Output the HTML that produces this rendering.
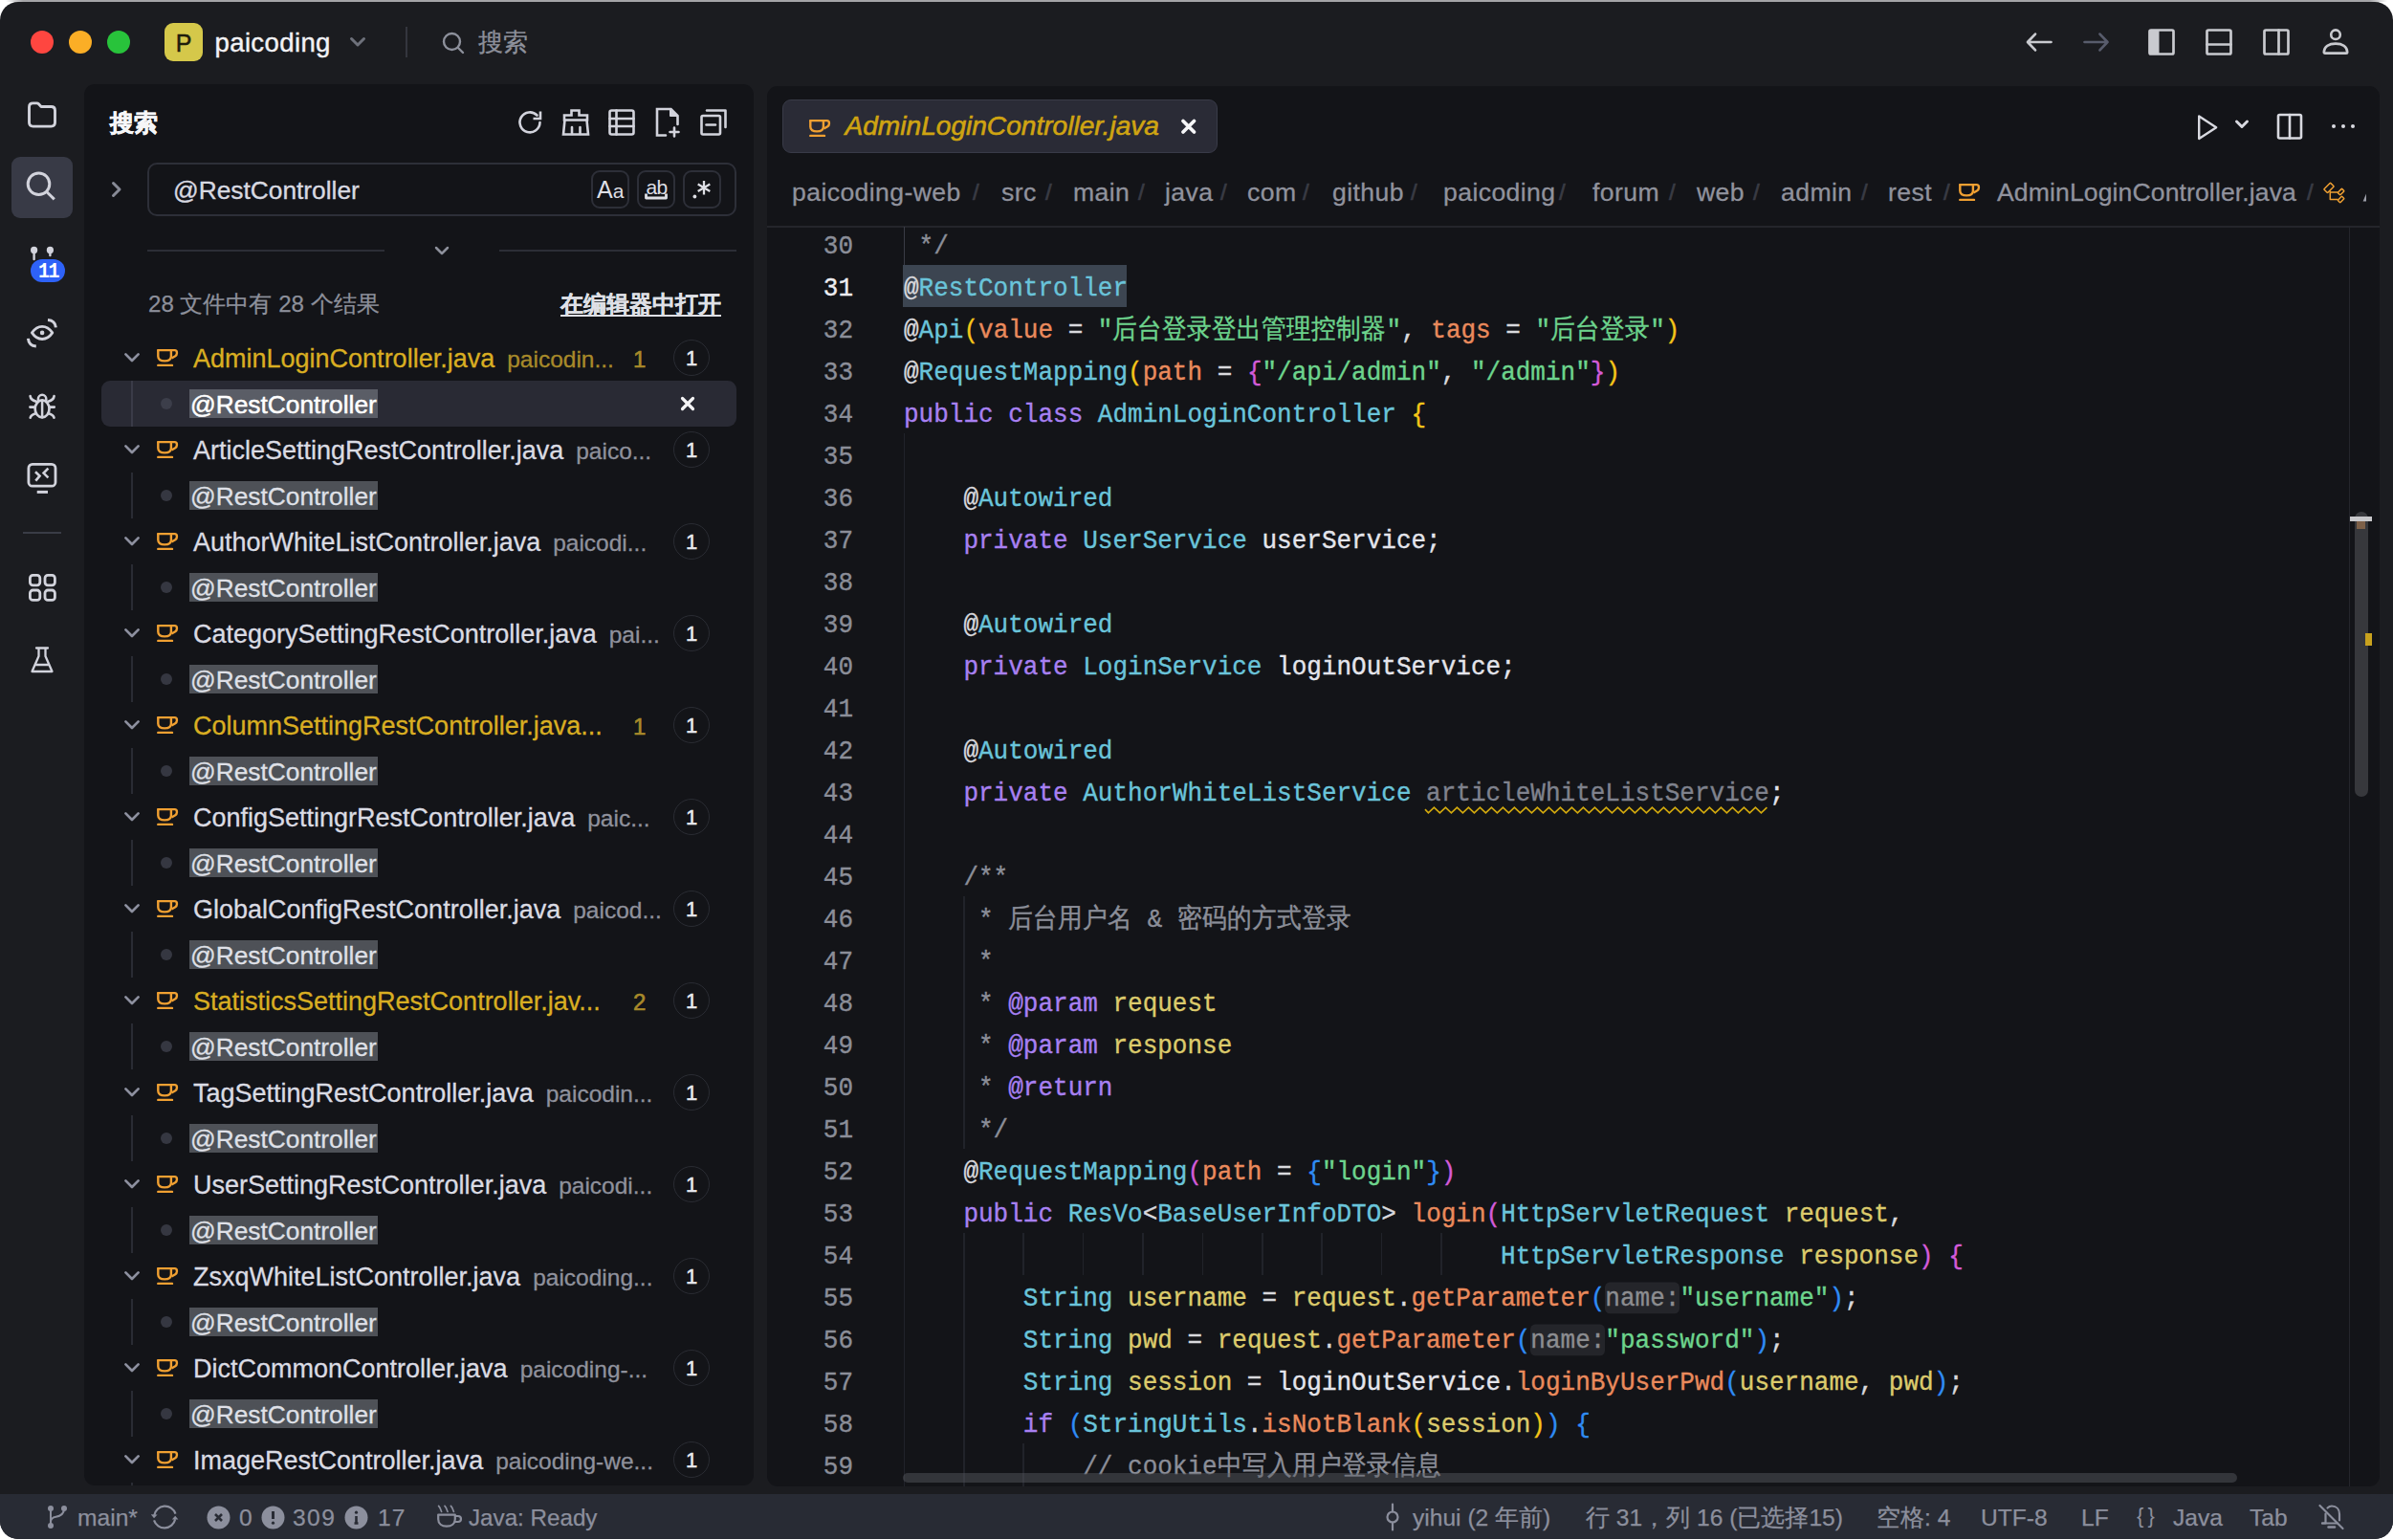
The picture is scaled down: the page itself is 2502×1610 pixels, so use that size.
<!DOCTYPE html><html><head><meta charset="utf-8"><style>html,body{margin:0;padding:0;width:2502px;height:1610px;overflow:hidden;background:#ffffff;}*{box-sizing:border-box;}</style></head><body>
<div style="position:absolute;left:0px;top:0px;width:2502px;height:2px;background:linear-gradient(to right,#ffffff 6px,#a4a4a7 24px,#a4a4a7 2478px,#ffffff 2496px);"></div>
<div style="position:absolute;left:0px;top:2px;width:2502px;height:1607px;border-radius:19px;background:#1b1c20;overflow:hidden;">
<div style="position:absolute;left:0px;top:-2px;width:2502px;height:1610px;">
<div style="position:absolute;left:32px;top:32px;width:24px;height:24px;border-radius:50%;background:#fe4640;"></div>
<div style="position:absolute;left:72px;top:32px;width:24px;height:24px;border-radius:50%;background:#fbae26;"></div>
<div style="position:absolute;left:112px;top:32px;width:24px;height:24px;border-radius:50%;background:#28c33b;"></div>
<div style="position:absolute;left:172px;top:24px;width:40px;height:40px;border-radius:9px;background:#d5c84a;"></div>
<div style="position:absolute;left:172px;top:28.50px;height:32px;line-height:32px;font-family:'Liberation Sans', sans-serif;font-size:25px;color:#1e1d0c;font-weight:500;white-space:pre;width:40px;text-align:center;-webkit-text-stroke:0.5px #1e1d0c;">P</div>
<div style="position:absolute;left:224.5px;top:26.70px;height:35px;line-height:35px;font-family:'Liberation Sans', sans-serif;font-size:27.6px;color:#f2f2f5;font-weight:500;white-space:pre;-webkit-text-stroke:0.4px #f2f2f5;letter-spacing:0.35px;">paicoding</div>
<svg style="position:absolute;left:364px;top:36px;" width="20" height="16" viewBox="0 0 20 16" fill="none" stroke-linecap="round" stroke-linejoin="round"><path d="M3.5 4.5 L10 11 L16.5 4.5" stroke="#6e717b" stroke-width="3"/></svg>
<div style="position:absolute;left:424px;top:28px;width:2px;height:32px;background:#34363e;"></div>
<svg style="position:absolute;left:460px;top:31px;" width="28" height="28" viewBox="0 0 28 28" fill="none" stroke-linecap="round" stroke-linejoin="round"><circle cx="12.5" cy="12.5" r="8.5" stroke="#8d909b" stroke-width="2.4"/><path d="M19 19 L24 24" stroke="#8d909b" stroke-width="2.4"/></svg>
<div style="position:absolute;left:500px;top:28.00px;height:33px;line-height:33px;font-family:'Liberation Sans', sans-serif;font-size:25.5px;color:#8d909b;font-weight:400;white-space:pre;-webkit-text-stroke:0.3px #8d909b;">搜索</div>
<svg style="position:absolute;left:2115px;top:30px;" width="34" height="28" viewBox="0 0 34 28" fill="none" stroke-linecap="round" stroke-linejoin="round"><path d="M5.5 14 H29.5 M13 5.6 L5 14 L13 22.4" stroke="#c9cacf" stroke-width="2.7"/></svg>
<svg style="position:absolute;left:2175px;top:30px;" width="34" height="28" viewBox="0 0 34 28" fill="none" stroke-linecap="round" stroke-linejoin="round"><path d="M4.5 14 H28.5 M20.5 5.6 L28.5 14 L20.5 22.4" stroke="#585c6c" stroke-width="2.7"/></svg>
<svg style="position:absolute;left:2245px;top:29px;" width="30" height="30" viewBox="0 0 30 30" fill="none" stroke-linecap="round" stroke-linejoin="round"><rect x="2.5" y="2.5" width="25" height="25" rx="1.5" stroke="#c9cacf" stroke-width="2.7"/><rect x="2.5" y="2.5" width="10" height="25" fill="#c9cacf"/></svg>
<svg style="position:absolute;left:2305px;top:29px;" width="30" height="30" viewBox="0 0 30 30" fill="none" stroke-linecap="round" stroke-linejoin="round"><rect x="2.5" y="2.5" width="25" height="25" rx="1.5" stroke="#c9cacf" stroke-width="2.7"/><path d="M2.5 17.5 H27.5" stroke="#c9cacf" stroke-width="2.7"/></svg>
<svg style="position:absolute;left:2365px;top:29px;" width="30" height="30" viewBox="0 0 30 30" fill="none" stroke-linecap="round" stroke-linejoin="round"><rect x="2.5" y="2.5" width="25" height="25" rx="1.5" stroke="#c9cacf" stroke-width="2.7"/><path d="M17.5 2.5 V27.5" stroke="#c9cacf" stroke-width="2.7"/></svg>
<svg style="position:absolute;left:2426px;top:28px;" width="32" height="32" viewBox="0 0 32 32" fill="none" stroke-linecap="round" stroke-linejoin="round"><circle cx="16" cy="8.2" r="4.8" stroke="#c9cacf" stroke-width="2.6"/><path d="M5 27.6 Q3.8 27.6 3.8 26.4 C4 20.5 9 17.6 16 17.6 C23 17.6 28 20.5 28.2 26.4 Q28.2 27.6 27 27.6 Z" stroke="#c9cacf" stroke-width="2.6"/></svg>
<svg style="position:absolute;left:26px;top:104px;" width="36" height="32" viewBox="0 0 36 32" fill="none" stroke-linecap="round" stroke-linejoin="round"><path d="M4.5 8 V24.1 Q4.5 28.1 8.5 28.1 H27.5 Q31.5 28.1 31.5 24.1 V11.5 Q31.5 7.5 27.5 7.5 H17 L14.5 4.8 Q13.7 3.9 12.5 3.9 H8.5 Q4.5 3.9 4.5 7.9 Z" stroke="#d2d3dc" stroke-width="2.9"/></svg>
<div style="position:absolute;left:12px;top:164px;width:64px;height:64px;border-radius:9px;background:#383a46;"></div>
<svg style="position:absolute;left:24px;top:176px;" width="40" height="40" viewBox="0 0 40 40" fill="none" stroke-linecap="round" stroke-linejoin="round"><circle cx="16.5" cy="16.3" r="11.3" stroke="#d2d3dc" stroke-width="3"/><path d="M25 24.8 L32.8 32.4" stroke="#d2d3dc" stroke-width="3" stroke-linecap="butt"/></svg>
<svg style="position:absolute;left:28px;top:252px;" width="32" height="22" viewBox="0 0 32 22" fill="none" stroke-linecap="round" stroke-linejoin="round"><circle cx="7.6" cy="9.4" r="3.6" fill="#d2d3dc"/><path d="M7.6 10 V19" stroke="#d2d3dc" stroke-width="2.4"/><circle cx="24.4" cy="9.4" r="3.6" fill="#d2d3dc"/><path d="M24.4 10 V15" stroke="#d2d3dc" stroke-width="2.4"/></svg>
<div style="position:absolute;left:32px;top:271px;width:36px;height:24px;border-radius:12px;background:#2e62f8;"></div>
<div style="position:absolute;left:32px;top:270.50px;height:26px;line-height:26px;font-family:'Liberation Mono', monospace;font-size:20px;color:#ffffff;font-weight:700;white-space:pre;width:37px;text-align:center;letter-spacing:-1.5px;transform:scaleY(1.12);">11</div>
<svg style="position:absolute;left:26px;top:330px;" width="36" height="36" viewBox="0 0 36 36" fill="none" stroke-linecap="round" stroke-linejoin="round"><path d="M7.4 17.9 C11 12.6 14.5 11.3 18.1 11.3 C21.7 11.3 25.2 12.6 28.8 17.9 C25.2 23.2 21.7 24.5 18.1 24.5 C14.5 24.5 11 23.2 7.4 17.9 Z" stroke="#d2d3dc" stroke-width="2.8"/><circle cx="18.1" cy="17.9" r="2.3" fill="#d2d3dc"/><path d="M24 4.6 Q31.6 5.2 32.4 12.4" stroke="#d2d3dc" stroke-width="3" stroke-linecap="butt"/><path d="M3.4 23.8 Q4.2 31.4 11.8 32" stroke="#d2d3dc" stroke-width="3" stroke-linecap="butt"/></svg>
<svg style="position:absolute;left:26px;top:406px;" width="36" height="36" viewBox="0 0 36 36" fill="none" stroke-linecap="round" stroke-linejoin="round"><ellipse cx="18.1" cy="21.4" rx="7.4" ry="9" stroke="#d2d3dc" stroke-width="2.7"/><path d="M13.9 12.8 V11 A4.2 4.2 0 0 1 22.3 11 V12.8" stroke="#d2d3dc" stroke-width="2.5"/><path d="M18.1 13 V30.3" stroke="#d2d3dc" stroke-width="2.5"/><path d="M5.6 8 Q6 12 11.8 13.8 M30.6 8 Q30.2 12 24.4 13.8 M5.4 19.6 H10.7 M25.5 19.6 H30.8 M11.4 26.2 Q6.2 27.5 5.7 30.8 M24.8 26.2 Q30 27.5 30.5 30.8" stroke="#d2d3dc" stroke-width="2.6"/></svg>
<svg style="position:absolute;left:26px;top:482px;" width="36" height="36" viewBox="0 0 36 36" fill="none" stroke-linecap="round" stroke-linejoin="round"><rect x="3.9" y="3.4" width="28.1" height="22.8" rx="4" stroke="#d2d3dc" stroke-width="2.8"/><path d="M12.7 32.4 H24" stroke="#d2d3dc" stroke-width="3" stroke-linecap="butt"/><path d="M11 11.3 L15.5 15.6 L11.3 20.6 M24.4 7.7 L19.6 12.6 L24.4 17.4" stroke="#d2d3dc" stroke-width="2.6" stroke-linecap="butt" stroke-linejoin="miter"/></svg>
<div style="position:absolute;left:24px;top:556px;width:40px;height:1.5px;background:#3a3c46;"></div>
<svg style="position:absolute;left:27px;top:597px;" width="36" height="36" viewBox="0 0 36 36" fill="none" stroke-linecap="round" stroke-linejoin="round"><rect x="4.4" y="4.4" width="10.4" height="10.4" rx="3" stroke="#d2d3dc" stroke-width="2.8"/><rect x="20" y="4.4" width="10.4" height="10.4" rx="3" stroke="#d2d3dc" stroke-width="2.8"/><rect x="4.4" y="20" width="10.4" height="10.4" rx="3" stroke="#d2d3dc" stroke-width="2.8"/><rect x="20" y="20" width="10.4" height="10.4" rx="3" stroke="#d2d3dc" stroke-width="2.8"/></svg>
<svg style="position:absolute;left:26px;top:672px;" width="36" height="36" viewBox="0 0 36 36" fill="none" stroke-linecap="round" stroke-linejoin="round"><path d="M12 5.5 H24 M14.5 5.5 V14 L7.5 30 H28.5 L21.5 14 V5.5 M10.5 23 H25.5" stroke="#d2d3dc" stroke-width="2.3"/></svg>
<div style="position:absolute;left:88px;top:88px;width:700px;height:1465px;border-radius:11px;background:#131418;overflow:hidden;">
<div style="position:absolute;left:-88px;top:-88px;width:2502px;height:1610px;">
<div style="position:absolute;left:115.3px;top:112.00px;height:32px;line-height:32px;font-family:'Liberation Sans', sans-serif;font-size:25px;color:#f6f6f8;font-weight:700;white-space:pre;-webkit-text-stroke:0.6px #f6f6f8;">搜索</div>
<svg style="position:absolute;left:540px;top:114px;" width="28" height="28" viewBox="0 0 28 28" fill="none" stroke-linecap="round" stroke-linejoin="round"><path d="M24.5 14 A10.5 10.5 0 1 1 21.5 6.5" stroke="#d2d3dc" stroke-width="2.6"/><path d="M25 2.5 V10 H17.5" stroke="#d2d3dc" stroke-width="2.6" stroke-linecap="butt" stroke-linejoin="miter"/></svg>
<svg style="position:absolute;left:586px;top:113px;" width="32" height="30" viewBox="0 0 32 30" fill="none" stroke-linecap="round" stroke-linejoin="round"><path d="M11.5 2.5 H19.5 V7.5 H28 V12.5 H4 V7.5 H11.5 Z" stroke="#d2d3dc" stroke-width="2.6" stroke-linejoin="miter"/><path d="M4.5 12.5 L3 27.5 H29 L27.5 12.5" stroke="#d2d3dc" stroke-width="2.6" stroke-linejoin="miter"/><path d="M12 20 V27 M20.5 20 V27" stroke="#d2d3dc" stroke-width="2.6"/></svg>
<svg style="position:absolute;left:635px;top:113px;" width="30" height="30" viewBox="0 0 30 30" fill="none" stroke-linecap="round" stroke-linejoin="round"><rect x="2.5" y="2.5" width="25" height="25" rx="2" stroke="#d2d3dc" stroke-width="2.6"/><path d="M2.5 11 H27.5 M2.5 19 H27.5 M9.5 2.5 V27.5" stroke="#d2d3dc" stroke-width="2.6"/></svg>
<svg style="position:absolute;left:684px;top:111px;" width="30" height="34" viewBox="0 0 30 34" fill="none" stroke-linecap="round" stroke-linejoin="round"><path d="M12 30.5 H3 V3 H17.5 L24.5 10 V19" stroke="#d2d3dc" stroke-width="2.6" stroke-linejoin="miter"/><path d="M17 3.5 V10 H24" stroke="#d2d3dc" stroke-width="2" fill="#d2d3dc"/><path d="M21 22.5 V31.5 M16.5 27 H25.5" stroke="#d2d3dc" stroke-width="2.6"/></svg>
<svg style="position:absolute;left:731px;top:113px;" width="30" height="30" viewBox="0 0 30 30" fill="none" stroke-linecap="round" stroke-linejoin="round"><rect x="2.5" y="8" width="19.5" height="19.5" rx="1.5" stroke="#d2d3dc" stroke-width="2.6"/><path d="M8 2.5 H27.5 V20" stroke="#d2d3dc" stroke-width="2.6"/><path d="M7.5 17.5 H17" stroke="#d2d3dc" stroke-width="2.6"/></svg>
<svg style="position:absolute;left:112px;top:186px;" width="20" height="24" viewBox="0 0 20 24" fill="none" stroke-linecap="round" stroke-linejoin="round"><path d="M6.5 5.5 L13 12 L6.5 18.5" stroke="#878a96" stroke-width="3"/></svg>
<div style="position:absolute;left:154px;top:170px;width:616px;height:56px;border:2px solid #2d2f38;border-radius:10px;"></div>
<div style="position:absolute;left:181px;top:182.00px;height:34px;line-height:34px;font-family:'Liberation Sans', sans-serif;font-size:26.3px;color:#d8d9e1;font-weight:400;white-space:pre;-webkit-text-stroke:0.35px #d8d9e1;">@RestController</div>
<div style="position:absolute;left:618px;top:178px;width:40px;height:40px;border:2px solid #2d2f38;border-radius:9px;"></div>
<div style="position:absolute;left:666px;top:178px;width:40px;height:40px;border:2px solid #2d2f38;border-radius:9px;"></div>
<div style="position:absolute;left:714px;top:178px;width:40px;height:40px;border:2px solid #2d2f38;border-radius:9px;"></div>
<div style="position:absolute;left:624px;top:183px;height:30px;line-height:30px;font-family:'Liberation Sans',sans-serif;color:#dedfe5;white-space:pre;"><span style="font-size:25px;">A</span><span style="font-size:21px;">a</span></div>
<div style="position:absolute;left:675.5px;top:181.50px;height:27px;line-height:27px;font-family:'Liberation Sans', sans-serif;font-size:21px;color:#dedfe5;font-weight:400;white-space:pre;letter-spacing:-0.6px;">ab</div>
<svg style="position:absolute;left:672px;top:200px;" width="28" height="12" viewBox="0 0 28 12" fill="none" stroke-linecap="round" stroke-linejoin="round"><path d="M3.5 2.5 V7 H24.5 V2.5" stroke="#dedfe5" stroke-width="2.8" stroke-linecap="butt" stroke-linejoin="round"/></svg>
<svg style="position:absolute;left:718px;top:184px;" width="28" height="26" viewBox="0 0 28 26" fill="none" stroke-linecap="round" stroke-linejoin="round"><circle cx="8.4" cy="21.5" r="1.9" fill="#dedfe5"/><path d="M18 5 V19.5 M11.7 8.6 L24.3 15.9 M24.3 8.6 L11.7 15.9" stroke="#dedfe5" stroke-width="2.3" stroke-linecap="butt"/></svg>
<div style="position:absolute;left:154px;top:261px;width:248px;height:1.5px;background:#2c2e36;"></div>
<div style="position:absolute;left:522px;top:261px;width:248px;height:1.5px;background:#2c2e36;"></div>
<svg style="position:absolute;left:452px;top:254px;" width="20" height="16" viewBox="0 0 20 16" fill="none" stroke-linecap="round" stroke-linejoin="round"><path d="M4 5 L10 11 L16 5" stroke="#8d909b" stroke-width="2.5"/></svg>
<div style="position:absolute;left:155px;top:301.50px;height:31px;line-height:31px;font-family:'Liberation Sans', sans-serif;font-size:24.1px;color:#8d909b;font-weight:400;white-space:pre;-webkit-text-stroke:0.25px #8d909b;">28 文件中有 28 个结果</div>
<div style="position:absolute;left:586px;top:301.50px;height:31px;line-height:31px;font-family:'Liberation Sans', sans-serif;font-size:24px;color:#dfe0e6;font-weight:700;white-space:pre;text-decoration:underline;text-underline-offset:3px;text-decoration-thickness:2px;-webkit-text-stroke:0.15px #dfe0e6;">在编辑器中打开</div>
<div style="position:absolute;left:106px;top:398px;width:664px;height:48px;border-radius:9px;background:#292a34;"></div>
<svg style="position:absolute;left:128px;top:366px;" width="20" height="16" viewBox="0 0 20 16" fill="none" stroke-linecap="round" stroke-linejoin="round"><path d="M3.4 4.4 L10 11 L16.6 4.4" stroke="#8d909f" stroke-width="2.7"/></svg>
<svg style="position:absolute;left:163px;top:364px;" width="24" height="22" viewBox="0 0 24 22" fill="none" stroke-linecap="round" stroke-linejoin="round"><path d="M1.2 2.1 H19.6 Q21.9 2.1 21.9 4.4 V5.6 Q21.9 7.2 20.3 8.2 L16.4 10.6" stroke="#f0a032" stroke-width="2.4" stroke-linecap="butt"/><path d="M2.3 2.1 V8.5 C2.3 11.8 4.8 13.4 9.1 13.4 C13.4 13.4 15.9 11.8 15.9 8.5 V2.1" stroke="#f0a032" stroke-width="2.4" stroke-linecap="butt"/><path d="M2.3 17.9 H17" stroke="#f0a032" stroke-width="2.4"/></svg>
<div style="position:absolute;left:202px;top:357.50px;height:35px;line-height:35px;font-family:'Liberation Sans', sans-serif;font-size:27px;color:#d9ae22;font-weight:400;white-space:pre;-webkit-text-stroke:0.3px currentColor;">AdminLoginController.java<span style="color:#a88a2a;font-size:24.5px;margin-left:13px;">paicodin...</span></div>
<div style="position:absolute;left:662px;top:359.50px;height:31px;line-height:31px;font-family:'Liberation Sans', sans-serif;font-size:24px;color:#a88a2a;font-weight:500;white-space:pre;-webkit-text-stroke:0.6px #a88a2a;">1</div>
<div style="position:absolute;left:704px;top:355px;width:38px;height:38px;border-radius:50%;border:1.5px solid #2a2c33;"></div>
<div style="position:absolute;left:704px;top:361.00px;height:28px;line-height:28px;font-family:'Liberation Sans', sans-serif;font-size:22px;color:#e8e9ee;font-weight:500;white-space:pre;width:38px;text-align:center;-webkit-text-stroke:0.5px #e8e9ee;">1</div>
<div style="position:absolute;left:137px;top:398px;width:1.5px;height:48px;background:#3a3b48;"></div>
<div style="position:absolute;left:168px;top:416px;width:12px;height:12px;border-radius:50%;background:#3c3e4a;"></div>
<div style="position:absolute;left:198px;top:407px;width:197px;height:29.5px;background:#5a5d66;"></div>
<div style="position:absolute;left:199px;top:406.00px;height:34px;line-height:34px;font-family:'Liberation Sans', sans-serif;font-size:26.3px;color:#ffffff;font-weight:400;white-space:pre;-webkit-text-stroke:0.5px #ffffff;">@RestController</div>
<svg style="position:absolute;left:128px;top:462px;" width="20" height="16" viewBox="0 0 20 16" fill="none" stroke-linecap="round" stroke-linejoin="round"><path d="M3.4 4.4 L10 11 L16.6 4.4" stroke="#8d909f" stroke-width="2.7"/></svg>
<svg style="position:absolute;left:163px;top:460px;" width="24" height="22" viewBox="0 0 24 22" fill="none" stroke-linecap="round" stroke-linejoin="round"><path d="M1.2 2.1 H19.6 Q21.9 2.1 21.9 4.4 V5.6 Q21.9 7.2 20.3 8.2 L16.4 10.6" stroke="#f0a032" stroke-width="2.4" stroke-linecap="butt"/><path d="M2.3 2.1 V8.5 C2.3 11.8 4.8 13.4 9.1 13.4 C13.4 13.4 15.9 11.8 15.9 8.5 V2.1" stroke="#f0a032" stroke-width="2.4" stroke-linecap="butt"/><path d="M2.3 17.9 H17" stroke="#f0a032" stroke-width="2.4"/></svg>
<div style="position:absolute;left:202px;top:453.50px;height:35px;line-height:35px;font-family:'Liberation Sans', sans-serif;font-size:27px;color:#dadbe3;font-weight:400;white-space:pre;-webkit-text-stroke:0.3px currentColor;">ArticleSettingRestController.java<span style="color:#8f919c;font-size:24.5px;margin-left:13px;">paico...</span></div>
<div style="position:absolute;left:704px;top:451px;width:38px;height:38px;border-radius:50%;border:1.5px solid #2a2c33;"></div>
<div style="position:absolute;left:704px;top:457.00px;height:28px;line-height:28px;font-family:'Liberation Sans', sans-serif;font-size:22px;color:#e8e9ee;font-weight:500;white-space:pre;width:38px;text-align:center;-webkit-text-stroke:0.5px #e8e9ee;">1</div>
<div style="position:absolute;left:137px;top:494px;width:1.5px;height:48px;background:#2a2c34;"></div>
<div style="position:absolute;left:168px;top:512px;width:12px;height:12px;border-radius:50%;background:#353741;"></div>
<div style="position:absolute;left:198px;top:503px;width:197px;height:29.5px;background:#4e5157;"></div>
<div style="position:absolute;left:199px;top:502.00px;height:34px;line-height:34px;font-family:'Liberation Sans', sans-serif;font-size:26.3px;color:#dfe0e7;font-weight:400;white-space:pre;-webkit-text-stroke:0.3px #dfe0e7;">@RestController</div>
<svg style="position:absolute;left:128px;top:558px;" width="20" height="16" viewBox="0 0 20 16" fill="none" stroke-linecap="round" stroke-linejoin="round"><path d="M3.4 4.4 L10 11 L16.6 4.4" stroke="#8d909f" stroke-width="2.7"/></svg>
<svg style="position:absolute;left:163px;top:556px;" width="24" height="22" viewBox="0 0 24 22" fill="none" stroke-linecap="round" stroke-linejoin="round"><path d="M1.2 2.1 H19.6 Q21.9 2.1 21.9 4.4 V5.6 Q21.9 7.2 20.3 8.2 L16.4 10.6" stroke="#f0a032" stroke-width="2.4" stroke-linecap="butt"/><path d="M2.3 2.1 V8.5 C2.3 11.8 4.8 13.4 9.1 13.4 C13.4 13.4 15.9 11.8 15.9 8.5 V2.1" stroke="#f0a032" stroke-width="2.4" stroke-linecap="butt"/><path d="M2.3 17.9 H17" stroke="#f0a032" stroke-width="2.4"/></svg>
<div style="position:absolute;left:202px;top:549.50px;height:35px;line-height:35px;font-family:'Liberation Sans', sans-serif;font-size:27px;color:#dadbe3;font-weight:400;white-space:pre;-webkit-text-stroke:0.3px currentColor;">AuthorWhiteListController.java<span style="color:#8f919c;font-size:24.5px;margin-left:13px;">paicodi...</span></div>
<div style="position:absolute;left:704px;top:547px;width:38px;height:38px;border-radius:50%;border:1.5px solid #2a2c33;"></div>
<div style="position:absolute;left:704px;top:553.00px;height:28px;line-height:28px;font-family:'Liberation Sans', sans-serif;font-size:22px;color:#e8e9ee;font-weight:500;white-space:pre;width:38px;text-align:center;-webkit-text-stroke:0.5px #e8e9ee;">1</div>
<div style="position:absolute;left:137px;top:590px;width:1.5px;height:48px;background:#2a2c34;"></div>
<div style="position:absolute;left:168px;top:608px;width:12px;height:12px;border-radius:50%;background:#353741;"></div>
<div style="position:absolute;left:198px;top:599px;width:197px;height:29.5px;background:#4e5157;"></div>
<div style="position:absolute;left:199px;top:598.00px;height:34px;line-height:34px;font-family:'Liberation Sans', sans-serif;font-size:26.3px;color:#dfe0e7;font-weight:400;white-space:pre;-webkit-text-stroke:0.3px #dfe0e7;">@RestController</div>
<svg style="position:absolute;left:128px;top:654px;" width="20" height="16" viewBox="0 0 20 16" fill="none" stroke-linecap="round" stroke-linejoin="round"><path d="M3.4 4.4 L10 11 L16.6 4.4" stroke="#8d909f" stroke-width="2.7"/></svg>
<svg style="position:absolute;left:163px;top:652px;" width="24" height="22" viewBox="0 0 24 22" fill="none" stroke-linecap="round" stroke-linejoin="round"><path d="M1.2 2.1 H19.6 Q21.9 2.1 21.9 4.4 V5.6 Q21.9 7.2 20.3 8.2 L16.4 10.6" stroke="#f0a032" stroke-width="2.4" stroke-linecap="butt"/><path d="M2.3 2.1 V8.5 C2.3 11.8 4.8 13.4 9.1 13.4 C13.4 13.4 15.9 11.8 15.9 8.5 V2.1" stroke="#f0a032" stroke-width="2.4" stroke-linecap="butt"/><path d="M2.3 17.9 H17" stroke="#f0a032" stroke-width="2.4"/></svg>
<div style="position:absolute;left:202px;top:645.50px;height:35px;line-height:35px;font-family:'Liberation Sans', sans-serif;font-size:27px;color:#dadbe3;font-weight:400;white-space:pre;-webkit-text-stroke:0.3px currentColor;">CategorySettingRestController.java<span style="color:#8f919c;font-size:24.5px;margin-left:13px;">pai...</span></div>
<div style="position:absolute;left:704px;top:643px;width:38px;height:38px;border-radius:50%;border:1.5px solid #2a2c33;"></div>
<div style="position:absolute;left:704px;top:649.00px;height:28px;line-height:28px;font-family:'Liberation Sans', sans-serif;font-size:22px;color:#e8e9ee;font-weight:500;white-space:pre;width:38px;text-align:center;-webkit-text-stroke:0.5px #e8e9ee;">1</div>
<div style="position:absolute;left:137px;top:686px;width:1.5px;height:48px;background:#2a2c34;"></div>
<div style="position:absolute;left:168px;top:704px;width:12px;height:12px;border-radius:50%;background:#353741;"></div>
<div style="position:absolute;left:198px;top:695px;width:197px;height:29.5px;background:#4e5157;"></div>
<div style="position:absolute;left:199px;top:694.00px;height:34px;line-height:34px;font-family:'Liberation Sans', sans-serif;font-size:26.3px;color:#dfe0e7;font-weight:400;white-space:pre;-webkit-text-stroke:0.3px #dfe0e7;">@RestController</div>
<svg style="position:absolute;left:128px;top:750px;" width="20" height="16" viewBox="0 0 20 16" fill="none" stroke-linecap="round" stroke-linejoin="round"><path d="M3.4 4.4 L10 11 L16.6 4.4" stroke="#8d909f" stroke-width="2.7"/></svg>
<svg style="position:absolute;left:163px;top:748px;" width="24" height="22" viewBox="0 0 24 22" fill="none" stroke-linecap="round" stroke-linejoin="round"><path d="M1.2 2.1 H19.6 Q21.9 2.1 21.9 4.4 V5.6 Q21.9 7.2 20.3 8.2 L16.4 10.6" stroke="#f0a032" stroke-width="2.4" stroke-linecap="butt"/><path d="M2.3 2.1 V8.5 C2.3 11.8 4.8 13.4 9.1 13.4 C13.4 13.4 15.9 11.8 15.9 8.5 V2.1" stroke="#f0a032" stroke-width="2.4" stroke-linecap="butt"/><path d="M2.3 17.9 H17" stroke="#f0a032" stroke-width="2.4"/></svg>
<div style="position:absolute;left:202px;top:741.50px;height:35px;line-height:35px;font-family:'Liberation Sans', sans-serif;font-size:27px;color:#d9ae22;font-weight:400;white-space:pre;-webkit-text-stroke:0.3px currentColor;">ColumnSettingRestController.java...</div>
<div style="position:absolute;left:662px;top:743.50px;height:31px;line-height:31px;font-family:'Liberation Sans', sans-serif;font-size:24px;color:#a88a2a;font-weight:500;white-space:pre;-webkit-text-stroke:0.6px #a88a2a;">1</div>
<div style="position:absolute;left:704px;top:739px;width:38px;height:38px;border-radius:50%;border:1.5px solid #2a2c33;"></div>
<div style="position:absolute;left:704px;top:745.00px;height:28px;line-height:28px;font-family:'Liberation Sans', sans-serif;font-size:22px;color:#e8e9ee;font-weight:500;white-space:pre;width:38px;text-align:center;-webkit-text-stroke:0.5px #e8e9ee;">1</div>
<div style="position:absolute;left:137px;top:782px;width:1.5px;height:48px;background:#2a2c34;"></div>
<div style="position:absolute;left:168px;top:800px;width:12px;height:12px;border-radius:50%;background:#353741;"></div>
<div style="position:absolute;left:198px;top:791px;width:197px;height:29.5px;background:#4e5157;"></div>
<div style="position:absolute;left:199px;top:790.00px;height:34px;line-height:34px;font-family:'Liberation Sans', sans-serif;font-size:26.3px;color:#dfe0e7;font-weight:400;white-space:pre;-webkit-text-stroke:0.3px #dfe0e7;">@RestController</div>
<svg style="position:absolute;left:128px;top:846px;" width="20" height="16" viewBox="0 0 20 16" fill="none" stroke-linecap="round" stroke-linejoin="round"><path d="M3.4 4.4 L10 11 L16.6 4.4" stroke="#8d909f" stroke-width="2.7"/></svg>
<svg style="position:absolute;left:163px;top:844px;" width="24" height="22" viewBox="0 0 24 22" fill="none" stroke-linecap="round" stroke-linejoin="round"><path d="M1.2 2.1 H19.6 Q21.9 2.1 21.9 4.4 V5.6 Q21.9 7.2 20.3 8.2 L16.4 10.6" stroke="#f0a032" stroke-width="2.4" stroke-linecap="butt"/><path d="M2.3 2.1 V8.5 C2.3 11.8 4.8 13.4 9.1 13.4 C13.4 13.4 15.9 11.8 15.9 8.5 V2.1" stroke="#f0a032" stroke-width="2.4" stroke-linecap="butt"/><path d="M2.3 17.9 H17" stroke="#f0a032" stroke-width="2.4"/></svg>
<div style="position:absolute;left:202px;top:837.50px;height:35px;line-height:35px;font-family:'Liberation Sans', sans-serif;font-size:27px;color:#dadbe3;font-weight:400;white-space:pre;-webkit-text-stroke:0.3px currentColor;">ConfigSettingrRestController.java<span style="color:#8f919c;font-size:24.5px;margin-left:13px;">paic...</span></div>
<div style="position:absolute;left:704px;top:835px;width:38px;height:38px;border-radius:50%;border:1.5px solid #2a2c33;"></div>
<div style="position:absolute;left:704px;top:841.00px;height:28px;line-height:28px;font-family:'Liberation Sans', sans-serif;font-size:22px;color:#e8e9ee;font-weight:500;white-space:pre;width:38px;text-align:center;-webkit-text-stroke:0.5px #e8e9ee;">1</div>
<div style="position:absolute;left:137px;top:878px;width:1.5px;height:48px;background:#2a2c34;"></div>
<div style="position:absolute;left:168px;top:896px;width:12px;height:12px;border-radius:50%;background:#353741;"></div>
<div style="position:absolute;left:198px;top:887px;width:197px;height:29.5px;background:#4e5157;"></div>
<div style="position:absolute;left:199px;top:886.00px;height:34px;line-height:34px;font-family:'Liberation Sans', sans-serif;font-size:26.3px;color:#dfe0e7;font-weight:400;white-space:pre;-webkit-text-stroke:0.3px #dfe0e7;">@RestController</div>
<svg style="position:absolute;left:128px;top:942px;" width="20" height="16" viewBox="0 0 20 16" fill="none" stroke-linecap="round" stroke-linejoin="round"><path d="M3.4 4.4 L10 11 L16.6 4.4" stroke="#8d909f" stroke-width="2.7"/></svg>
<svg style="position:absolute;left:163px;top:940px;" width="24" height="22" viewBox="0 0 24 22" fill="none" stroke-linecap="round" stroke-linejoin="round"><path d="M1.2 2.1 H19.6 Q21.9 2.1 21.9 4.4 V5.6 Q21.9 7.2 20.3 8.2 L16.4 10.6" stroke="#f0a032" stroke-width="2.4" stroke-linecap="butt"/><path d="M2.3 2.1 V8.5 C2.3 11.8 4.8 13.4 9.1 13.4 C13.4 13.4 15.9 11.8 15.9 8.5 V2.1" stroke="#f0a032" stroke-width="2.4" stroke-linecap="butt"/><path d="M2.3 17.9 H17" stroke="#f0a032" stroke-width="2.4"/></svg>
<div style="position:absolute;left:202px;top:933.50px;height:35px;line-height:35px;font-family:'Liberation Sans', sans-serif;font-size:27px;color:#dadbe3;font-weight:400;white-space:pre;-webkit-text-stroke:0.3px currentColor;">GlobalConfigRestController.java<span style="color:#8f919c;font-size:24.5px;margin-left:13px;">paicod...</span></div>
<div style="position:absolute;left:704px;top:931px;width:38px;height:38px;border-radius:50%;border:1.5px solid #2a2c33;"></div>
<div style="position:absolute;left:704px;top:937.00px;height:28px;line-height:28px;font-family:'Liberation Sans', sans-serif;font-size:22px;color:#e8e9ee;font-weight:500;white-space:pre;width:38px;text-align:center;-webkit-text-stroke:0.5px #e8e9ee;">1</div>
<div style="position:absolute;left:137px;top:974px;width:1.5px;height:48px;background:#2a2c34;"></div>
<div style="position:absolute;left:168px;top:992px;width:12px;height:12px;border-radius:50%;background:#353741;"></div>
<div style="position:absolute;left:198px;top:983px;width:197px;height:29.5px;background:#4e5157;"></div>
<div style="position:absolute;left:199px;top:982.00px;height:34px;line-height:34px;font-family:'Liberation Sans', sans-serif;font-size:26.3px;color:#dfe0e7;font-weight:400;white-space:pre;-webkit-text-stroke:0.3px #dfe0e7;">@RestController</div>
<svg style="position:absolute;left:128px;top:1038px;" width="20" height="16" viewBox="0 0 20 16" fill="none" stroke-linecap="round" stroke-linejoin="round"><path d="M3.4 4.4 L10 11 L16.6 4.4" stroke="#8d909f" stroke-width="2.7"/></svg>
<svg style="position:absolute;left:163px;top:1036px;" width="24" height="22" viewBox="0 0 24 22" fill="none" stroke-linecap="round" stroke-linejoin="round"><path d="M1.2 2.1 H19.6 Q21.9 2.1 21.9 4.4 V5.6 Q21.9 7.2 20.3 8.2 L16.4 10.6" stroke="#f0a032" stroke-width="2.4" stroke-linecap="butt"/><path d="M2.3 2.1 V8.5 C2.3 11.8 4.8 13.4 9.1 13.4 C13.4 13.4 15.9 11.8 15.9 8.5 V2.1" stroke="#f0a032" stroke-width="2.4" stroke-linecap="butt"/><path d="M2.3 17.9 H17" stroke="#f0a032" stroke-width="2.4"/></svg>
<div style="position:absolute;left:202px;top:1029.50px;height:35px;line-height:35px;font-family:'Liberation Sans', sans-serif;font-size:27px;color:#d9ae22;font-weight:400;white-space:pre;-webkit-text-stroke:0.3px currentColor;">StatisticsSettingRestController.jav...</div>
<div style="position:absolute;left:662px;top:1031.50px;height:31px;line-height:31px;font-family:'Liberation Sans', sans-serif;font-size:24px;color:#a88a2a;font-weight:500;white-space:pre;-webkit-text-stroke:0.6px #a88a2a;">2</div>
<div style="position:absolute;left:704px;top:1027px;width:38px;height:38px;border-radius:50%;border:1.5px solid #2a2c33;"></div>
<div style="position:absolute;left:704px;top:1033.00px;height:28px;line-height:28px;font-family:'Liberation Sans', sans-serif;font-size:22px;color:#e8e9ee;font-weight:500;white-space:pre;width:38px;text-align:center;-webkit-text-stroke:0.5px #e8e9ee;">1</div>
<div style="position:absolute;left:137px;top:1070px;width:1.5px;height:48px;background:#2a2c34;"></div>
<div style="position:absolute;left:168px;top:1088px;width:12px;height:12px;border-radius:50%;background:#353741;"></div>
<div style="position:absolute;left:198px;top:1079px;width:197px;height:29.5px;background:#4e5157;"></div>
<div style="position:absolute;left:199px;top:1078.00px;height:34px;line-height:34px;font-family:'Liberation Sans', sans-serif;font-size:26.3px;color:#dfe0e7;font-weight:400;white-space:pre;-webkit-text-stroke:0.3px #dfe0e7;">@RestController</div>
<svg style="position:absolute;left:128px;top:1134px;" width="20" height="16" viewBox="0 0 20 16" fill="none" stroke-linecap="round" stroke-linejoin="round"><path d="M3.4 4.4 L10 11 L16.6 4.4" stroke="#8d909f" stroke-width="2.7"/></svg>
<svg style="position:absolute;left:163px;top:1132px;" width="24" height="22" viewBox="0 0 24 22" fill="none" stroke-linecap="round" stroke-linejoin="round"><path d="M1.2 2.1 H19.6 Q21.9 2.1 21.9 4.4 V5.6 Q21.9 7.2 20.3 8.2 L16.4 10.6" stroke="#f0a032" stroke-width="2.4" stroke-linecap="butt"/><path d="M2.3 2.1 V8.5 C2.3 11.8 4.8 13.4 9.1 13.4 C13.4 13.4 15.9 11.8 15.9 8.5 V2.1" stroke="#f0a032" stroke-width="2.4" stroke-linecap="butt"/><path d="M2.3 17.9 H17" stroke="#f0a032" stroke-width="2.4"/></svg>
<div style="position:absolute;left:202px;top:1125.50px;height:35px;line-height:35px;font-family:'Liberation Sans', sans-serif;font-size:27px;color:#dadbe3;font-weight:400;white-space:pre;-webkit-text-stroke:0.3px currentColor;">TagSettingRestController.java<span style="color:#8f919c;font-size:24.5px;margin-left:13px;">paicodin...</span></div>
<div style="position:absolute;left:704px;top:1123px;width:38px;height:38px;border-radius:50%;border:1.5px solid #2a2c33;"></div>
<div style="position:absolute;left:704px;top:1129.00px;height:28px;line-height:28px;font-family:'Liberation Sans', sans-serif;font-size:22px;color:#e8e9ee;font-weight:500;white-space:pre;width:38px;text-align:center;-webkit-text-stroke:0.5px #e8e9ee;">1</div>
<div style="position:absolute;left:137px;top:1166px;width:1.5px;height:48px;background:#2a2c34;"></div>
<div style="position:absolute;left:168px;top:1184px;width:12px;height:12px;border-radius:50%;background:#353741;"></div>
<div style="position:absolute;left:198px;top:1175px;width:197px;height:29.5px;background:#4e5157;"></div>
<div style="position:absolute;left:199px;top:1174.00px;height:34px;line-height:34px;font-family:'Liberation Sans', sans-serif;font-size:26.3px;color:#dfe0e7;font-weight:400;white-space:pre;-webkit-text-stroke:0.3px #dfe0e7;">@RestController</div>
<svg style="position:absolute;left:128px;top:1230px;" width="20" height="16" viewBox="0 0 20 16" fill="none" stroke-linecap="round" stroke-linejoin="round"><path d="M3.4 4.4 L10 11 L16.6 4.4" stroke="#8d909f" stroke-width="2.7"/></svg>
<svg style="position:absolute;left:163px;top:1228px;" width="24" height="22" viewBox="0 0 24 22" fill="none" stroke-linecap="round" stroke-linejoin="round"><path d="M1.2 2.1 H19.6 Q21.9 2.1 21.9 4.4 V5.6 Q21.9 7.2 20.3 8.2 L16.4 10.6" stroke="#f0a032" stroke-width="2.4" stroke-linecap="butt"/><path d="M2.3 2.1 V8.5 C2.3 11.8 4.8 13.4 9.1 13.4 C13.4 13.4 15.9 11.8 15.9 8.5 V2.1" stroke="#f0a032" stroke-width="2.4" stroke-linecap="butt"/><path d="M2.3 17.9 H17" stroke="#f0a032" stroke-width="2.4"/></svg>
<div style="position:absolute;left:202px;top:1221.50px;height:35px;line-height:35px;font-family:'Liberation Sans', sans-serif;font-size:27px;color:#dadbe3;font-weight:400;white-space:pre;-webkit-text-stroke:0.3px currentColor;">UserSettingRestController.java<span style="color:#8f919c;font-size:24.5px;margin-left:13px;">paicodi...</span></div>
<div style="position:absolute;left:704px;top:1219px;width:38px;height:38px;border-radius:50%;border:1.5px solid #2a2c33;"></div>
<div style="position:absolute;left:704px;top:1225.00px;height:28px;line-height:28px;font-family:'Liberation Sans', sans-serif;font-size:22px;color:#e8e9ee;font-weight:500;white-space:pre;width:38px;text-align:center;-webkit-text-stroke:0.5px #e8e9ee;">1</div>
<div style="position:absolute;left:137px;top:1262px;width:1.5px;height:48px;background:#2a2c34;"></div>
<div style="position:absolute;left:168px;top:1280px;width:12px;height:12px;border-radius:50%;background:#353741;"></div>
<div style="position:absolute;left:198px;top:1271px;width:197px;height:29.5px;background:#4e5157;"></div>
<div style="position:absolute;left:199px;top:1270.00px;height:34px;line-height:34px;font-family:'Liberation Sans', sans-serif;font-size:26.3px;color:#dfe0e7;font-weight:400;white-space:pre;-webkit-text-stroke:0.3px #dfe0e7;">@RestController</div>
<svg style="position:absolute;left:128px;top:1326px;" width="20" height="16" viewBox="0 0 20 16" fill="none" stroke-linecap="round" stroke-linejoin="round"><path d="M3.4 4.4 L10 11 L16.6 4.4" stroke="#8d909f" stroke-width="2.7"/></svg>
<svg style="position:absolute;left:163px;top:1324px;" width="24" height="22" viewBox="0 0 24 22" fill="none" stroke-linecap="round" stroke-linejoin="round"><path d="M1.2 2.1 H19.6 Q21.9 2.1 21.9 4.4 V5.6 Q21.9 7.2 20.3 8.2 L16.4 10.6" stroke="#f0a032" stroke-width="2.4" stroke-linecap="butt"/><path d="M2.3 2.1 V8.5 C2.3 11.8 4.8 13.4 9.1 13.4 C13.4 13.4 15.9 11.8 15.9 8.5 V2.1" stroke="#f0a032" stroke-width="2.4" stroke-linecap="butt"/><path d="M2.3 17.9 H17" stroke="#f0a032" stroke-width="2.4"/></svg>
<div style="position:absolute;left:202px;top:1317.50px;height:35px;line-height:35px;font-family:'Liberation Sans', sans-serif;font-size:27px;color:#dadbe3;font-weight:400;white-space:pre;-webkit-text-stroke:0.3px currentColor;">ZsxqWhiteListController.java<span style="color:#8f919c;font-size:24.5px;margin-left:13px;">paicoding...</span></div>
<div style="position:absolute;left:704px;top:1315px;width:38px;height:38px;border-radius:50%;border:1.5px solid #2a2c33;"></div>
<div style="position:absolute;left:704px;top:1321.00px;height:28px;line-height:28px;font-family:'Liberation Sans', sans-serif;font-size:22px;color:#e8e9ee;font-weight:500;white-space:pre;width:38px;text-align:center;-webkit-text-stroke:0.5px #e8e9ee;">1</div>
<div style="position:absolute;left:137px;top:1358px;width:1.5px;height:48px;background:#2a2c34;"></div>
<div style="position:absolute;left:168px;top:1376px;width:12px;height:12px;border-radius:50%;background:#353741;"></div>
<div style="position:absolute;left:198px;top:1367px;width:197px;height:29.5px;background:#4e5157;"></div>
<div style="position:absolute;left:199px;top:1366.00px;height:34px;line-height:34px;font-family:'Liberation Sans', sans-serif;font-size:26.3px;color:#dfe0e7;font-weight:400;white-space:pre;-webkit-text-stroke:0.3px #dfe0e7;">@RestController</div>
<svg style="position:absolute;left:128px;top:1422px;" width="20" height="16" viewBox="0 0 20 16" fill="none" stroke-linecap="round" stroke-linejoin="round"><path d="M3.4 4.4 L10 11 L16.6 4.4" stroke="#8d909f" stroke-width="2.7"/></svg>
<svg style="position:absolute;left:163px;top:1420px;" width="24" height="22" viewBox="0 0 24 22" fill="none" stroke-linecap="round" stroke-linejoin="round"><path d="M1.2 2.1 H19.6 Q21.9 2.1 21.9 4.4 V5.6 Q21.9 7.2 20.3 8.2 L16.4 10.6" stroke="#f0a032" stroke-width="2.4" stroke-linecap="butt"/><path d="M2.3 2.1 V8.5 C2.3 11.8 4.8 13.4 9.1 13.4 C13.4 13.4 15.9 11.8 15.9 8.5 V2.1" stroke="#f0a032" stroke-width="2.4" stroke-linecap="butt"/><path d="M2.3 17.9 H17" stroke="#f0a032" stroke-width="2.4"/></svg>
<div style="position:absolute;left:202px;top:1413.50px;height:35px;line-height:35px;font-family:'Liberation Sans', sans-serif;font-size:27px;color:#dadbe3;font-weight:400;white-space:pre;-webkit-text-stroke:0.3px currentColor;">DictCommonController.java<span style="color:#8f919c;font-size:24.5px;margin-left:13px;">paicoding-...</span></div>
<div style="position:absolute;left:704px;top:1411px;width:38px;height:38px;border-radius:50%;border:1.5px solid #2a2c33;"></div>
<div style="position:absolute;left:704px;top:1417.00px;height:28px;line-height:28px;font-family:'Liberation Sans', sans-serif;font-size:22px;color:#e8e9ee;font-weight:500;white-space:pre;width:38px;text-align:center;-webkit-text-stroke:0.5px #e8e9ee;">1</div>
<div style="position:absolute;left:137px;top:1454px;width:1.5px;height:48px;background:#2a2c34;"></div>
<div style="position:absolute;left:168px;top:1472px;width:12px;height:12px;border-radius:50%;background:#353741;"></div>
<div style="position:absolute;left:198px;top:1463px;width:197px;height:29.5px;background:#4e5157;"></div>
<div style="position:absolute;left:199px;top:1462.00px;height:34px;line-height:34px;font-family:'Liberation Sans', sans-serif;font-size:26.3px;color:#dfe0e7;font-weight:400;white-space:pre;-webkit-text-stroke:0.3px #dfe0e7;">@RestController</div>
<svg style="position:absolute;left:128px;top:1518px;" width="20" height="16" viewBox="0 0 20 16" fill="none" stroke-linecap="round" stroke-linejoin="round"><path d="M3.4 4.4 L10 11 L16.6 4.4" stroke="#8d909f" stroke-width="2.7"/></svg>
<svg style="position:absolute;left:163px;top:1516px;" width="24" height="22" viewBox="0 0 24 22" fill="none" stroke-linecap="round" stroke-linejoin="round"><path d="M1.2 2.1 H19.6 Q21.9 2.1 21.9 4.4 V5.6 Q21.9 7.2 20.3 8.2 L16.4 10.6" stroke="#f0a032" stroke-width="2.4" stroke-linecap="butt"/><path d="M2.3 2.1 V8.5 C2.3 11.8 4.8 13.4 9.1 13.4 C13.4 13.4 15.9 11.8 15.9 8.5 V2.1" stroke="#f0a032" stroke-width="2.4" stroke-linecap="butt"/><path d="M2.3 17.9 H17" stroke="#f0a032" stroke-width="2.4"/></svg>
<div style="position:absolute;left:202px;top:1509.50px;height:35px;line-height:35px;font-family:'Liberation Sans', sans-serif;font-size:27px;color:#dadbe3;font-weight:400;white-space:pre;-webkit-text-stroke:0.3px currentColor;">ImageRestController.java<span style="color:#8f919c;font-size:24.5px;margin-left:13px;">paicoding-we...</span></div>
<div style="position:absolute;left:704px;top:1507px;width:38px;height:38px;border-radius:50%;border:1.5px solid #2a2c33;"></div>
<div style="position:absolute;left:704px;top:1513.00px;height:28px;line-height:28px;font-family:'Liberation Sans', sans-serif;font-size:22px;color:#e8e9ee;font-weight:500;white-space:pre;width:38px;text-align:center;-webkit-text-stroke:0.5px #e8e9ee;">1</div>
<div style="position:absolute;left:137px;top:1550px;width:1.5px;height:48px;background:#2a2c34;"></div>
<div style="position:absolute;left:168px;top:1568px;width:12px;height:12px;border-radius:50%;background:#353741;"></div>
<div style="position:absolute;left:198px;top:1559px;width:197px;height:29.5px;background:#4e5157;"></div>
<div style="position:absolute;left:199px;top:1558.00px;height:34px;line-height:34px;font-family:'Liberation Sans', sans-serif;font-size:26.3px;color:#dfe0e7;font-weight:400;white-space:pre;-webkit-text-stroke:0.3px #dfe0e7;">@RestController</div>
<svg style="position:absolute;left:709px;top:412px;" width="20" height="20" viewBox="0 0 20 20" fill="none" stroke-linecap="round" stroke-linejoin="round"><path d="M4.5 4.5 L15.5 15.5 M15.5 4.5 L4.5 15.5" stroke="#f4f4f6" stroke-width="3.2"/></svg>
</div></div>
<div style="position:absolute;left:802px;top:90px;width:1686px;height:1464px;border-radius:11px;background:#131418;overflow:hidden;">
<div style="position:absolute;left:-802px;top:-90px;width:2502px;height:1610px;">
<div style="position:absolute;left:818px;top:104px;width:455px;height:56px;border-radius:9px;background:#2a2b36;border:1.5px solid #393b48;"></div>
<svg style="position:absolute;left:845px;top:124px;" width="24" height="22" viewBox="0 0 24 22" fill="none" stroke-linecap="round" stroke-linejoin="round"><path d="M1.2 2.1 H19.6 Q21.9 2.1 21.9 4.4 V5.6 Q21.9 7.2 20.3 8.2 L16.4 10.6" stroke="#f0a032" stroke-width="2.4" stroke-linecap="butt"/><path d="M2.3 2.1 V8.5 C2.3 11.8 4.8 13.4 9.1 13.4 C13.4 13.4 15.9 11.8 15.9 8.5 V2.1" stroke="#f0a032" stroke-width="2.4" stroke-linecap="butt"/><path d="M2.3 17.9 H17" stroke="#f0a032" stroke-width="2.4"/></svg>
<div style="position:absolute;left:883.5px;top:114.00px;height:36px;line-height:36px;font-family:'Liberation Sans', sans-serif;font-size:28.1px;color:#cfa412;font-weight:400;white-space:pre;font-style:italic;-webkit-text-stroke:0.6px #cfa412;">AdminLoginController.java</div>
<svg style="position:absolute;left:1232px;top:121px;" width="22" height="22" viewBox="0 0 22 22" fill="none" stroke-linecap="round" stroke-linejoin="round"><path d="M5 5.5 L16.5 17 M16.5 5.5 L5 17" stroke="#f6f6f8" stroke-width="3.8"/></svg>
<svg style="position:absolute;left:2292px;top:116px;" width="32" height="34" viewBox="0 0 32 34" fill="none" stroke-linecap="round" stroke-linejoin="round"><path d="M7.2 5.5 L25.2 17.2 L7.2 28.9 Z" stroke="#d8d9e0" stroke-width="2.4"/></svg>
<svg style="position:absolute;left:2333px;top:120px;" width="22" height="18" viewBox="0 0 22 18" fill="none" stroke-linecap="round" stroke-linejoin="round"><path d="M5.5 7 L11 12.5 L16.5 7" stroke="#d8d9e0" stroke-width="3"/></svg>
<svg style="position:absolute;left:2378px;top:116px;" width="32" height="32" viewBox="0 0 32 32" fill="none" stroke-linecap="round" stroke-linejoin="round"><rect x="4" y="4" width="24" height="24.5" rx="1.5" stroke="#d8d9e0" stroke-width="2.6"/><path d="M16 4 V28.5" stroke="#d8d9e0" stroke-width="2.6"/></svg>
<div style="position:absolute;left:2437.7px;top:129.7px;width:4.6px;height:4.6px;border-radius:50%;background:#d8d9e0;"></div>
<div style="position:absolute;left:2447.7px;top:129.7px;width:4.6px;height:4.6px;border-radius:50%;background:#d8d9e0;"></div>
<div style="position:absolute;left:2457.7px;top:129.7px;width:4.6px;height:4.6px;border-radius:50%;background:#d8d9e0;"></div>
<div style="position:absolute;left:828px;top:183.50px;height:34px;line-height:34px;font-family:'Liberation Sans', sans-serif;font-size:26.6px;color:#90929d;font-weight:400;white-space:pre;letter-spacing:0.4px;-webkit-text-stroke:0.3px #90929d;">paicoding-web</div>
<div style="position:absolute;left:1047px;top:183.50px;height:34px;line-height:34px;font-family:'Liberation Sans', sans-serif;font-size:26.6px;color:#90929d;font-weight:400;white-space:pre;letter-spacing:0.4px;-webkit-text-stroke:0.3px #90929d;">src</div>
<div style="position:absolute;left:1122px;top:183.50px;height:34px;line-height:34px;font-family:'Liberation Sans', sans-serif;font-size:26.6px;color:#90929d;font-weight:400;white-space:pre;letter-spacing:0.4px;-webkit-text-stroke:0.3px #90929d;">main</div>
<div style="position:absolute;left:1218px;top:183.50px;height:34px;line-height:34px;font-family:'Liberation Sans', sans-serif;font-size:26.6px;color:#90929d;font-weight:400;white-space:pre;letter-spacing:0.4px;-webkit-text-stroke:0.3px #90929d;">java</div>
<div style="position:absolute;left:1304px;top:183.50px;height:34px;line-height:34px;font-family:'Liberation Sans', sans-serif;font-size:26.6px;color:#90929d;font-weight:400;white-space:pre;letter-spacing:0.4px;-webkit-text-stroke:0.3px #90929d;">com</div>
<div style="position:absolute;left:1393px;top:183.50px;height:34px;line-height:34px;font-family:'Liberation Sans', sans-serif;font-size:26.6px;color:#90929d;font-weight:400;white-space:pre;letter-spacing:0.4px;-webkit-text-stroke:0.3px #90929d;">github</div>
<div style="position:absolute;left:1509px;top:183.50px;height:34px;line-height:34px;font-family:'Liberation Sans', sans-serif;font-size:26.6px;color:#90929d;font-weight:400;white-space:pre;letter-spacing:0.4px;-webkit-text-stroke:0.3px #90929d;">paicoding</div>
<div style="position:absolute;left:1665px;top:183.50px;height:34px;line-height:34px;font-family:'Liberation Sans', sans-serif;font-size:26.6px;color:#90929d;font-weight:400;white-space:pre;letter-spacing:0.4px;-webkit-text-stroke:0.3px #90929d;">forum</div>
<div style="position:absolute;left:1774px;top:183.50px;height:34px;line-height:34px;font-family:'Liberation Sans', sans-serif;font-size:26.6px;color:#90929d;font-weight:400;white-space:pre;letter-spacing:0.4px;-webkit-text-stroke:0.3px #90929d;">web</div>
<div style="position:absolute;left:1862px;top:183.50px;height:34px;line-height:34px;font-family:'Liberation Sans', sans-serif;font-size:26.6px;color:#90929d;font-weight:400;white-space:pre;letter-spacing:0.4px;-webkit-text-stroke:0.3px #90929d;">admin</div>
<div style="position:absolute;left:1974px;top:183.50px;height:34px;line-height:34px;font-family:'Liberation Sans', sans-serif;font-size:26.6px;color:#90929d;font-weight:400;white-space:pre;letter-spacing:0.4px;-webkit-text-stroke:0.3px #90929d;">rest</div>
<div style="position:absolute;left:1017px;top:185.00px;height:31px;line-height:31px;font-family:'Liberation Sans', sans-serif;font-size:24px;color:#393b44;font-weight:400;white-space:pre;-webkit-text-stroke:0.7px #393b44;">/</div>
<div style="position:absolute;left:1093px;top:185.00px;height:31px;line-height:31px;font-family:'Liberation Sans', sans-serif;font-size:24px;color:#393b44;font-weight:400;white-space:pre;-webkit-text-stroke:0.7px #393b44;">/</div>
<div style="position:absolute;left:1190px;top:185.00px;height:31px;line-height:31px;font-family:'Liberation Sans', sans-serif;font-size:24px;color:#393b44;font-weight:400;white-space:pre;-webkit-text-stroke:0.7px #393b44;">/</div>
<div style="position:absolute;left:1276px;top:185.00px;height:31px;line-height:31px;font-family:'Liberation Sans', sans-serif;font-size:24px;color:#393b44;font-weight:400;white-space:pre;-webkit-text-stroke:0.7px #393b44;">/</div>
<div style="position:absolute;left:1362px;top:185.00px;height:31px;line-height:31px;font-family:'Liberation Sans', sans-serif;font-size:24px;color:#393b44;font-weight:400;white-space:pre;-webkit-text-stroke:0.7px #393b44;">/</div>
<div style="position:absolute;left:1475px;top:185.00px;height:31px;line-height:31px;font-family:'Liberation Sans', sans-serif;font-size:24px;color:#393b44;font-weight:400;white-space:pre;-webkit-text-stroke:0.7px #393b44;">/</div>
<div style="position:absolute;left:1630px;top:185.00px;height:31px;line-height:31px;font-family:'Liberation Sans', sans-serif;font-size:24px;color:#393b44;font-weight:400;white-space:pre;-webkit-text-stroke:0.7px #393b44;">/</div>
<div style="position:absolute;left:1745px;top:185.00px;height:31px;line-height:31px;font-family:'Liberation Sans', sans-serif;font-size:24px;color:#393b44;font-weight:400;white-space:pre;-webkit-text-stroke:0.7px #393b44;">/</div>
<div style="position:absolute;left:1833px;top:185.00px;height:31px;line-height:31px;font-family:'Liberation Sans', sans-serif;font-size:24px;color:#393b44;font-weight:400;white-space:pre;-webkit-text-stroke:0.7px #393b44;">/</div>
<div style="position:absolute;left:1946px;top:185.00px;height:31px;line-height:31px;font-family:'Liberation Sans', sans-serif;font-size:24px;color:#393b44;font-weight:400;white-space:pre;-webkit-text-stroke:0.7px #393b44;">/</div>
<div style="position:absolute;left:2032px;top:185.00px;height:31px;line-height:31px;font-family:'Liberation Sans', sans-serif;font-size:24px;color:#393b44;font-weight:400;white-space:pre;-webkit-text-stroke:0.7px #393b44;">/</div>
<div style="position:absolute;left:2412px;top:185.00px;height:31px;line-height:31px;font-family:'Liberation Sans', sans-serif;font-size:24px;color:#393b44;font-weight:400;white-space:pre;-webkit-text-stroke:0.7px #393b44;">/</div>
<svg style="position:absolute;left:2047px;top:191px;" width="24" height="22" viewBox="0 0 24 22" fill="none" stroke-linecap="round" stroke-linejoin="round"><path d="M1.2 2.1 H19.6 Q21.9 2.1 21.9 4.4 V5.6 Q21.9 7.2 20.3 8.2 L16.4 10.6" stroke="#f0a032" stroke-width="2.4" stroke-linecap="butt"/><path d="M2.3 2.1 V8.5 C2.3 11.8 4.8 13.4 9.1 13.4 C13.4 13.4 15.9 11.8 15.9 8.5 V2.1" stroke="#f0a032" stroke-width="2.4" stroke-linecap="butt"/><path d="M2.3 17.9 H17" stroke="#f0a032" stroke-width="2.4"/></svg>
<div style="position:absolute;left:2088px;top:183.50px;height:34px;line-height:34px;font-family:'Liberation Sans', sans-serif;font-size:26.6px;color:#90929d;font-weight:400;white-space:pre;letter-spacing:0.1px;-webkit-text-stroke:0.3px #90929d;">AdminLoginController.java</div>
<svg style="position:absolute;left:2426px;top:190px;" width="28" height="26" viewBox="0 0 28 26" fill="none" stroke-linecap="round" stroke-linejoin="round"><rect x="4.2" y="3.7" width="9.6" height="5.4" rx="0.6" stroke="#f0a032" stroke-width="1.5" transform="rotate(-45 9 6.4)"/><rect x="18.6" y="8.8" width="6" height="3.6" rx="0.6" stroke="#f0a032" stroke-width="1.5" transform="rotate(-45 21.6 10.6)"/><rect x="18.6" y="16.7" width="6" height="3.6" rx="0.6" stroke="#f0a032" stroke-width="1.5" transform="rotate(-45 21.6 18.5)"/><path d="M10.3 9.5 V18.5 H18.4 M10.3 11 H18.4" stroke="#f0a032" stroke-width="1.5" stroke-linecap="butt"/></svg>
<svg style="position:absolute;left:2468px;top:200px;" width="10" height="12"><path d="M2.6 10.5 L6 2.5 V10.5 Z" fill="#9c9ea8"/></svg>
<div style="position:absolute;left:802px;top:236px;width:1686px;height:1.5px;background:#24252b;"></div>
<div style="position:absolute;left:2456px;top:237px;width:1.2px;height:1330px;background:#25262c;"></div>
<div style="position:absolute;left:2462px;top:535px;width:14px;height:298px;border-radius:7px;background:#37383c;"></div>
<div style="position:absolute;left:2457px;top:540px;width:23px;height:4.5px;background:#c8c8cb;"></div>
<div style="position:absolute;left:2464px;top:544.5px;width:9px;height:8.5px;background:#7d6048;"></div>
<div style="position:absolute;left:2473px;top:662px;width:7px;height:12.5px;background:#c9a21e;"></div>
<div style="position:absolute;left:944px;top:277px;width:234px;height:44px;background:#3c4551;"></div>
<div style="position:absolute;left:944.6px;top:237px;width:1.5px;height:40px;background:#3a3c46;"></div>
<div style="position:absolute;left:944.6px;top:453px;width:1.5px;height:1101px;background:#21232a;"></div>
<div style="position:absolute;left:1007.0px;top:937px;width:1.5px;height:264px;background:#21232a;"></div>
<div style="position:absolute;left:1007.0px;top:1289px;width:1.5px;height:265px;background:#21232a;"></div>
<div style="position:absolute;left:1069.4px;top:1289px;width:1.5px;height:44px;background:#21232a;"></div>
<div style="position:absolute;left:1131.8px;top:1289px;width:1.5px;height:44px;background:#21232a;"></div>
<div style="position:absolute;left:1194.2px;top:1289px;width:1.5px;height:44px;background:#21232a;"></div>
<div style="position:absolute;left:1256.6px;top:1289px;width:1.5px;height:44px;background:#21232a;"></div>
<div style="position:absolute;left:1319.0px;top:1289px;width:1.5px;height:44px;background:#21232a;"></div>
<div style="position:absolute;left:1381.4px;top:1289px;width:1.5px;height:44px;background:#21232a;"></div>
<div style="position:absolute;left:1443.8px;top:1289px;width:1.5px;height:44px;background:#21232a;"></div>
<div style="position:absolute;left:1506.2px;top:1289px;width:1.5px;height:44px;background:#21232a;"></div>
<div style="position:absolute;left:1069.4px;top:1509px;width:1.5px;height:45px;background:#21232a;"></div>
<div style="position:absolute;left:800px;top:241.00px;height:33px;line-height:33px;font-family:'Liberation Mono', monospace;font-size:26px;color:#8b8e98;font-weight:400;white-space:pre;width:92px;text-align:right;-webkit-text-stroke:0.35px #8b8e98;transform:scaleY(1.09);">30</div>
<div style="position:absolute;left:945px;top:241.00px;height:33px;line-height:33px;font-family:'Liberation Mono', monospace;font-size:26px;color:#e4e5ec;font-weight:400;white-space:pre;-webkit-text-stroke:0.35px currentColor;transform:scaleY(1.09);"><span style="color:#8b8e98"> */</span></div>
<div style="position:absolute;left:800px;top:285.00px;height:33px;line-height:33px;font-family:'Liberation Mono', monospace;font-size:26px;color:#eeeef2;font-weight:400;white-space:pre;width:92px;text-align:right;-webkit-text-stroke:0.35px #eeeef2;transform:scaleY(1.09);">31</div>
<div style="position:absolute;left:945px;top:285.00px;height:33px;line-height:33px;font-family:'Liberation Mono', monospace;font-size:26px;color:#e4e5ec;font-weight:400;white-space:pre;-webkit-text-stroke:0.35px currentColor;transform:scaleY(1.09);"><span style="color:#d9d9dd">@</span><span style="color:#6ac4da">RestController</span></div>
<div style="position:absolute;left:800px;top:329.00px;height:33px;line-height:33px;font-family:'Liberation Mono', monospace;font-size:26px;color:#8b8e98;font-weight:400;white-space:pre;width:92px;text-align:right;-webkit-text-stroke:0.35px #8b8e98;transform:scaleY(1.09);">32</div>
<div style="position:absolute;left:945px;top:329.00px;height:33px;line-height:33px;font-family:'Liberation Mono', monospace;font-size:26px;color:#e4e5ec;font-weight:400;white-space:pre;-webkit-text-stroke:0.35px currentColor;transform:scaleY(1.09);"><span style="color:#d9d9dd">@</span><span style="color:#6ac4da">Api</span><span style="color:#f5c518">(</span><span style="color:#ea8a5c">value</span><span style="color:#d9d9dd"> = </span><span style="color:#6dd48d">"后台登录登出管理控制器"</span><span style="color:#d9d9dd">, </span><span style="color:#ea8a5c">tags</span><span style="color:#d9d9dd"> = </span><span style="color:#6dd48d">"后台登录"</span><span style="color:#f5c518">)</span></div>
<div style="position:absolute;left:800px;top:373.00px;height:33px;line-height:33px;font-family:'Liberation Mono', monospace;font-size:26px;color:#8b8e98;font-weight:400;white-space:pre;width:92px;text-align:right;-webkit-text-stroke:0.35px #8b8e98;transform:scaleY(1.09);">33</div>
<div style="position:absolute;left:945px;top:373.00px;height:33px;line-height:33px;font-family:'Liberation Mono', monospace;font-size:26px;color:#e4e5ec;font-weight:400;white-space:pre;-webkit-text-stroke:0.35px currentColor;transform:scaleY(1.09);"><span style="color:#d9d9dd">@</span><span style="color:#6ac4da">RequestMapping</span><span style="color:#f5c518">(</span><span style="color:#ea8a5c">path</span><span style="color:#d9d9dd"> = </span><span style="color:#d35bd8">{</span><span style="color:#6dd48d">"/api/admin"</span><span style="color:#d9d9dd">, </span><span style="color:#6dd48d">"/admin"</span><span style="color:#d35bd8">}</span><span style="color:#f5c518">)</span></div>
<div style="position:absolute;left:800px;top:417.00px;height:33px;line-height:33px;font-family:'Liberation Mono', monospace;font-size:26px;color:#8b8e98;font-weight:400;white-space:pre;width:92px;text-align:right;-webkit-text-stroke:0.35px #8b8e98;transform:scaleY(1.09);">34</div>
<div style="position:absolute;left:945px;top:417.00px;height:33px;line-height:33px;font-family:'Liberation Mono', monospace;font-size:26px;color:#e4e5ec;font-weight:400;white-space:pre;-webkit-text-stroke:0.35px currentColor;transform:scaleY(1.09);"><span style="color:#a880f2">public class </span><span style="color:#6ac4da">AdminLoginController</span><span style="color:#d9d9dd"> </span><span style="color:#f5c518">{</span></div>
<div style="position:absolute;left:800px;top:461.00px;height:33px;line-height:33px;font-family:'Liberation Mono', monospace;font-size:26px;color:#8b8e98;font-weight:400;white-space:pre;width:92px;text-align:right;-webkit-text-stroke:0.35px #8b8e98;transform:scaleY(1.09);">35</div>
<div style="position:absolute;left:800px;top:505.00px;height:33px;line-height:33px;font-family:'Liberation Mono', monospace;font-size:26px;color:#8b8e98;font-weight:400;white-space:pre;width:92px;text-align:right;-webkit-text-stroke:0.35px #8b8e98;transform:scaleY(1.09);">36</div>
<div style="position:absolute;left:945px;top:505.00px;height:33px;line-height:33px;font-family:'Liberation Mono', monospace;font-size:26px;color:#e4e5ec;font-weight:400;white-space:pre;-webkit-text-stroke:0.35px currentColor;transform:scaleY(1.09);"><span style="color:#d9d9dd">    @</span><span style="color:#6ac4da">Autowired</span></div>
<div style="position:absolute;left:800px;top:549.00px;height:33px;line-height:33px;font-family:'Liberation Mono', monospace;font-size:26px;color:#8b8e98;font-weight:400;white-space:pre;width:92px;text-align:right;-webkit-text-stroke:0.35px #8b8e98;transform:scaleY(1.09);">37</div>
<div style="position:absolute;left:945px;top:549.00px;height:33px;line-height:33px;font-family:'Liberation Mono', monospace;font-size:26px;color:#e4e5ec;font-weight:400;white-space:pre;-webkit-text-stroke:0.35px currentColor;transform:scaleY(1.09);"><span style="color:#a880f2">    private </span><span style="color:#6ac4da">UserService</span><span style="color:#e4e5ec"> userService;</span></div>
<div style="position:absolute;left:800px;top:593.00px;height:33px;line-height:33px;font-family:'Liberation Mono', monospace;font-size:26px;color:#8b8e98;font-weight:400;white-space:pre;width:92px;text-align:right;-webkit-text-stroke:0.35px #8b8e98;transform:scaleY(1.09);">38</div>
<div style="position:absolute;left:800px;top:637.00px;height:33px;line-height:33px;font-family:'Liberation Mono', monospace;font-size:26px;color:#8b8e98;font-weight:400;white-space:pre;width:92px;text-align:right;-webkit-text-stroke:0.35px #8b8e98;transform:scaleY(1.09);">39</div>
<div style="position:absolute;left:945px;top:637.00px;height:33px;line-height:33px;font-family:'Liberation Mono', monospace;font-size:26px;color:#e4e5ec;font-weight:400;white-space:pre;-webkit-text-stroke:0.35px currentColor;transform:scaleY(1.09);"><span style="color:#d9d9dd">    @</span><span style="color:#6ac4da">Autowired</span></div>
<div style="position:absolute;left:800px;top:681.00px;height:33px;line-height:33px;font-family:'Liberation Mono', monospace;font-size:26px;color:#8b8e98;font-weight:400;white-space:pre;width:92px;text-align:right;-webkit-text-stroke:0.35px #8b8e98;transform:scaleY(1.09);">40</div>
<div style="position:absolute;left:945px;top:681.00px;height:33px;line-height:33px;font-family:'Liberation Mono', monospace;font-size:26px;color:#e4e5ec;font-weight:400;white-space:pre;-webkit-text-stroke:0.35px currentColor;transform:scaleY(1.09);"><span style="color:#a880f2">    private </span><span style="color:#6ac4da">LoginService</span><span style="color:#e4e5ec"> loginOutService;</span></div>
<div style="position:absolute;left:800px;top:725.00px;height:33px;line-height:33px;font-family:'Liberation Mono', monospace;font-size:26px;color:#8b8e98;font-weight:400;white-space:pre;width:92px;text-align:right;-webkit-text-stroke:0.35px #8b8e98;transform:scaleY(1.09);">41</div>
<div style="position:absolute;left:800px;top:769.00px;height:33px;line-height:33px;font-family:'Liberation Mono', monospace;font-size:26px;color:#8b8e98;font-weight:400;white-space:pre;width:92px;text-align:right;-webkit-text-stroke:0.35px #8b8e98;transform:scaleY(1.09);">42</div>
<div style="position:absolute;left:945px;top:769.00px;height:33px;line-height:33px;font-family:'Liberation Mono', monospace;font-size:26px;color:#e4e5ec;font-weight:400;white-space:pre;-webkit-text-stroke:0.35px currentColor;transform:scaleY(1.09);"><span style="color:#d9d9dd">    @</span><span style="color:#6ac4da">Autowired</span></div>
<div style="position:absolute;left:800px;top:813.00px;height:33px;line-height:33px;font-family:'Liberation Mono', monospace;font-size:26px;color:#8b8e98;font-weight:400;white-space:pre;width:92px;text-align:right;-webkit-text-stroke:0.35px #8b8e98;transform:scaleY(1.09);">43</div>
<div style="position:absolute;left:945px;top:813.00px;height:33px;line-height:33px;font-family:'Liberation Mono', monospace;font-size:26px;color:#e4e5ec;font-weight:400;white-space:pre;-webkit-text-stroke:0.35px currentColor;transform:scaleY(1.09);"><span style="color:#a880f2">    private </span><span style="color:#6ac4da">AuthorWhiteListService</span><span style="color:#d9d9dd"> </span><span style="color:#7f828d">articleWhiteListService</span><span style="color:#e4e5ec">;</span></div>
<div style="position:absolute;left:800px;top:857.00px;height:33px;line-height:33px;font-family:'Liberation Mono', monospace;font-size:26px;color:#8b8e98;font-weight:400;white-space:pre;width:92px;text-align:right;-webkit-text-stroke:0.35px #8b8e98;transform:scaleY(1.09);">44</div>
<div style="position:absolute;left:800px;top:901.00px;height:33px;line-height:33px;font-family:'Liberation Mono', monospace;font-size:26px;color:#8b8e98;font-weight:400;white-space:pre;width:92px;text-align:right;-webkit-text-stroke:0.35px #8b8e98;transform:scaleY(1.09);">45</div>
<div style="position:absolute;left:945px;top:901.00px;height:33px;line-height:33px;font-family:'Liberation Mono', monospace;font-size:26px;color:#e4e5ec;font-weight:400;white-space:pre;-webkit-text-stroke:0.35px currentColor;transform:scaleY(1.09);"><span style="color:#8b8e98">    /**</span></div>
<div style="position:absolute;left:800px;top:945.00px;height:33px;line-height:33px;font-family:'Liberation Mono', monospace;font-size:26px;color:#8b8e98;font-weight:400;white-space:pre;width:92px;text-align:right;-webkit-text-stroke:0.35px #8b8e98;transform:scaleY(1.09);">46</div>
<div style="position:absolute;left:945px;top:945.00px;height:33px;line-height:33px;font-family:'Liberation Mono', monospace;font-size:26px;color:#e4e5ec;font-weight:400;white-space:pre;-webkit-text-stroke:0.35px currentColor;transform:scaleY(1.09);"><span style="color:#8b8e98">     * 后台用户名 &amp; 密码的方式登录</span></div>
<div style="position:absolute;left:800px;top:989.00px;height:33px;line-height:33px;font-family:'Liberation Mono', monospace;font-size:26px;color:#8b8e98;font-weight:400;white-space:pre;width:92px;text-align:right;-webkit-text-stroke:0.35px #8b8e98;transform:scaleY(1.09);">47</div>
<div style="position:absolute;left:945px;top:989.00px;height:33px;line-height:33px;font-family:'Liberation Mono', monospace;font-size:26px;color:#e4e5ec;font-weight:400;white-space:pre;-webkit-text-stroke:0.35px currentColor;transform:scaleY(1.09);"><span style="color:#8b8e98">     *</span></div>
<div style="position:absolute;left:800px;top:1033.00px;height:33px;line-height:33px;font-family:'Liberation Mono', monospace;font-size:26px;color:#8b8e98;font-weight:400;white-space:pre;width:92px;text-align:right;-webkit-text-stroke:0.35px #8b8e98;transform:scaleY(1.09);">48</div>
<div style="position:absolute;left:945px;top:1033.00px;height:33px;line-height:33px;font-family:'Liberation Mono', monospace;font-size:26px;color:#e4e5ec;font-weight:400;white-space:pre;-webkit-text-stroke:0.35px currentColor;transform:scaleY(1.09);"><span style="color:#8b8e98">     * </span><span style="color:#a880f2">@param</span><span style="color:#dccb6c"> request</span></div>
<div style="position:absolute;left:800px;top:1077.00px;height:33px;line-height:33px;font-family:'Liberation Mono', monospace;font-size:26px;color:#8b8e98;font-weight:400;white-space:pre;width:92px;text-align:right;-webkit-text-stroke:0.35px #8b8e98;transform:scaleY(1.09);">49</div>
<div style="position:absolute;left:945px;top:1077.00px;height:33px;line-height:33px;font-family:'Liberation Mono', monospace;font-size:26px;color:#e4e5ec;font-weight:400;white-space:pre;-webkit-text-stroke:0.35px currentColor;transform:scaleY(1.09);"><span style="color:#8b8e98">     * </span><span style="color:#a880f2">@param</span><span style="color:#dccb6c"> response</span></div>
<div style="position:absolute;left:800px;top:1121.00px;height:33px;line-height:33px;font-family:'Liberation Mono', monospace;font-size:26px;color:#8b8e98;font-weight:400;white-space:pre;width:92px;text-align:right;-webkit-text-stroke:0.35px #8b8e98;transform:scaleY(1.09);">50</div>
<div style="position:absolute;left:945px;top:1121.00px;height:33px;line-height:33px;font-family:'Liberation Mono', monospace;font-size:26px;color:#e4e5ec;font-weight:400;white-space:pre;-webkit-text-stroke:0.35px currentColor;transform:scaleY(1.09);"><span style="color:#8b8e98">     * </span><span style="color:#a880f2">@return</span></div>
<div style="position:absolute;left:800px;top:1165.00px;height:33px;line-height:33px;font-family:'Liberation Mono', monospace;font-size:26px;color:#8b8e98;font-weight:400;white-space:pre;width:92px;text-align:right;-webkit-text-stroke:0.35px #8b8e98;transform:scaleY(1.09);">51</div>
<div style="position:absolute;left:945px;top:1165.00px;height:33px;line-height:33px;font-family:'Liberation Mono', monospace;font-size:26px;color:#e4e5ec;font-weight:400;white-space:pre;-webkit-text-stroke:0.35px currentColor;transform:scaleY(1.09);"><span style="color:#8b8e98">     */</span></div>
<div style="position:absolute;left:800px;top:1209.00px;height:33px;line-height:33px;font-family:'Liberation Mono', monospace;font-size:26px;color:#8b8e98;font-weight:400;white-space:pre;width:92px;text-align:right;-webkit-text-stroke:0.35px #8b8e98;transform:scaleY(1.09);">52</div>
<div style="position:absolute;left:945px;top:1209.00px;height:33px;line-height:33px;font-family:'Liberation Mono', monospace;font-size:26px;color:#e4e5ec;font-weight:400;white-space:pre;-webkit-text-stroke:0.35px currentColor;transform:scaleY(1.09);"><span style="color:#d9d9dd">    @</span><span style="color:#6ac4da">RequestMapping</span><span style="color:#d35bd8">(</span><span style="color:#ea8a5c">path</span><span style="color:#d9d9dd"> = </span><span style="color:#2f8cf5">{</span><span style="color:#6dd48d">"login"</span><span style="color:#2f8cf5">}</span><span style="color:#d35bd8">)</span></div>
<div style="position:absolute;left:800px;top:1253.00px;height:33px;line-height:33px;font-family:'Liberation Mono', monospace;font-size:26px;color:#8b8e98;font-weight:400;white-space:pre;width:92px;text-align:right;-webkit-text-stroke:0.35px #8b8e98;transform:scaleY(1.09);">53</div>
<div style="position:absolute;left:945px;top:1253.00px;height:33px;line-height:33px;font-family:'Liberation Mono', monospace;font-size:26px;color:#e4e5ec;font-weight:400;white-space:pre;-webkit-text-stroke:0.35px currentColor;transform:scaleY(1.09);"><span style="color:#a880f2">    public </span><span style="color:#6ac4da">ResVo</span><span style="color:#d9d9dd">&lt;</span><span style="color:#6ac4da">BaseUserInfoDTO</span><span style="color:#d9d9dd">&gt; </span><span style="color:#ea8a5c">login</span><span style="color:#d35bd8">(</span><span style="color:#6ac4da">HttpServletRequest</span><span style="color:#d9d9dd"> </span><span style="color:#dccb6c">request</span><span style="color:#d9d9dd">,</span></div>
<div style="position:absolute;left:800px;top:1297.00px;height:33px;line-height:33px;font-family:'Liberation Mono', monospace;font-size:26px;color:#8b8e98;font-weight:400;white-space:pre;width:92px;text-align:right;-webkit-text-stroke:0.35px #8b8e98;transform:scaleY(1.09);">54</div>
<div style="position:absolute;left:945px;top:1297.00px;height:33px;line-height:33px;font-family:'Liberation Mono', monospace;font-size:26px;color:#e4e5ec;font-weight:400;white-space:pre;-webkit-text-stroke:0.35px currentColor;transform:scaleY(1.09);"><span style="color:#d9d9dd">                                        </span><span style="color:#6ac4da">HttpServletResponse</span><span style="color:#d9d9dd"> </span><span style="color:#dccb6c">response</span><span style="color:#d35bd8">)</span><span style="color:#d9d9dd"> </span><span style="color:#d35bd8">{</span></div>
<div style="position:absolute;left:800px;top:1341.00px;height:33px;line-height:33px;font-family:'Liberation Mono', monospace;font-size:26px;color:#8b8e98;font-weight:400;white-space:pre;width:92px;text-align:right;-webkit-text-stroke:0.35px #8b8e98;transform:scaleY(1.09);">55</div>
<div style="position:absolute;left:945px;top:1341.00px;height:33px;line-height:33px;font-family:'Liberation Mono', monospace;font-size:26px;color:#e4e5ec;font-weight:400;white-space:pre;-webkit-text-stroke:0.35px currentColor;transform:scaleY(1.09);"><span style="color:#6ac4da">        String </span><span style="color:#dccb6c">username</span><span style="color:#d9d9dd"> = </span><span style="color:#dccb6c">request</span><span style="color:#d9d9dd">.</span><span style="color:#ea8a5c">getParameter</span><span style="color:#2f8cf5">(</span><span style="color:#8c8d90;background:#24252a;border-radius:5px;">name:</span><span style="color:#6dd48d">"username"</span><span style="color:#2f8cf5">)</span><span style="color:#d9d9dd">;</span></div>
<div style="position:absolute;left:800px;top:1385.00px;height:33px;line-height:33px;font-family:'Liberation Mono', monospace;font-size:26px;color:#8b8e98;font-weight:400;white-space:pre;width:92px;text-align:right;-webkit-text-stroke:0.35px #8b8e98;transform:scaleY(1.09);">56</div>
<div style="position:absolute;left:945px;top:1385.00px;height:33px;line-height:33px;font-family:'Liberation Mono', monospace;font-size:26px;color:#e4e5ec;font-weight:400;white-space:pre;-webkit-text-stroke:0.35px currentColor;transform:scaleY(1.09);"><span style="color:#6ac4da">        String </span><span style="color:#dccb6c">pwd</span><span style="color:#d9d9dd"> = </span><span style="color:#dccb6c">request</span><span style="color:#d9d9dd">.</span><span style="color:#ea8a5c">getParameter</span><span style="color:#2f8cf5">(</span><span style="color:#8c8d90;background:#24252a;border-radius:5px;">name:</span><span style="color:#6dd48d">"password"</span><span style="color:#2f8cf5">)</span><span style="color:#d9d9dd">;</span></div>
<div style="position:absolute;left:800px;top:1429.00px;height:33px;line-height:33px;font-family:'Liberation Mono', monospace;font-size:26px;color:#8b8e98;font-weight:400;white-space:pre;width:92px;text-align:right;-webkit-text-stroke:0.35px #8b8e98;transform:scaleY(1.09);">57</div>
<div style="position:absolute;left:945px;top:1429.00px;height:33px;line-height:33px;font-family:'Liberation Mono', monospace;font-size:26px;color:#e4e5ec;font-weight:400;white-space:pre;-webkit-text-stroke:0.35px currentColor;transform:scaleY(1.09);"><span style="color:#6ac4da">        String </span><span style="color:#dccb6c">session</span><span style="color:#d9d9dd"> = </span><span style="color:#e4e5ec">loginOutService</span><span style="color:#d9d9dd">.</span><span style="color:#ea8a5c">loginByUserPwd</span><span style="color:#2f8cf5">(</span><span style="color:#dccb6c">username</span><span style="color:#d9d9dd">, </span><span style="color:#dccb6c">pwd</span><span style="color:#2f8cf5">)</span><span style="color:#d9d9dd">;</span></div>
<div style="position:absolute;left:800px;top:1473.00px;height:33px;line-height:33px;font-family:'Liberation Mono', monospace;font-size:26px;color:#8b8e98;font-weight:400;white-space:pre;width:92px;text-align:right;-webkit-text-stroke:0.35px #8b8e98;transform:scaleY(1.09);">58</div>
<div style="position:absolute;left:945px;top:1473.00px;height:33px;line-height:33px;font-family:'Liberation Mono', monospace;font-size:26px;color:#e4e5ec;font-weight:400;white-space:pre;-webkit-text-stroke:0.35px currentColor;transform:scaleY(1.09);"><span style="color:#a880f2">        if </span><span style="color:#2f8cf5">(</span><span style="color:#6ac4da">StringUtils</span><span style="color:#d9d9dd">.</span><span style="color:#ea8a5c">isNotBlank</span><span style="color:#f5c518">(</span><span style="color:#dccb6c">session</span><span style="color:#f5c518">)</span><span style="color:#2f8cf5">)</span><span style="color:#d9d9dd"> </span><span style="color:#2f8cf5">{</span></div>
<div style="position:absolute;left:800px;top:1517.00px;height:33px;line-height:33px;font-family:'Liberation Mono', monospace;font-size:26px;color:#8b8e98;font-weight:400;white-space:pre;width:92px;text-align:right;-webkit-text-stroke:0.35px #8b8e98;transform:scaleY(1.09);">59</div>
<div style="position:absolute;left:945px;top:1517.00px;height:33px;line-height:33px;font-family:'Liberation Mono', monospace;font-size:26px;color:#e4e5ec;font-weight:400;white-space:pre;-webkit-text-stroke:0.35px currentColor;transform:scaleY(1.09);"><span style="color:#8b8e98">            // cookie中写入用户登录信息</span></div>
<svg style="position:absolute;left:1489px;top:842px;" width="361" height="10" viewBox="0 0 361 10" fill="none" stroke-linecap="round" stroke-linejoin="round"><path d="M1 4.2 L4.4 7.8 L10.4 2.1 L16.4 7.8 L22.4 2.1 L28.4 7.8 L34.4 2.1 L40.4 7.8 L46.4 2.1 L52.4 7.8 L58.4 2.1 L64.4 7.8 L70.4 2.1 L76.4 7.8 L82.4 2.1 L88.4 7.8 L94.4 2.1 L100.4 7.8 L106.4 2.1 L112.4 7.8 L118.4 2.1 L124.4 7.8 L130.4 2.1 L136.4 7.8 L142.4 2.1 L148.4 7.8 L154.4 2.1 L160.4 7.8 L166.4 2.1 L172.4 7.8 L178.4 2.1 L184.4 7.8 L190.4 2.1 L196.4 7.8 L202.4 2.1 L208.4 7.8 L214.4 2.1 L220.4 7.8 L226.4 2.1 L232.4 7.8 L238.4 2.1 L244.4 7.8 L250.4 2.1 L256.4 7.8 L262.4 2.1 L268.4 7.8 L274.4 2.1 L280.4 7.8 L286.4 2.1 L292.4 7.8 L298.4 2.1 L304.4 7.8 L310.4 2.1 L316.4 7.8 L322.4 2.1 L328.4 7.8 L334.4 2.1 L340.4 7.8 L346.4 2.1 L352.4 7.8 L358.4 2.1" stroke="#d1a80e" stroke-width="1.7" stroke-linecap="butt" stroke-linejoin="miter"/></svg>
<div style="position:absolute;left:944px;top:1540px;width:1395px;height:10px;border-radius:5px;background:rgba(92,94,100,0.45);"></div>
</div></div>
<div style="position:absolute;left:0px;top:1562px;width:2502px;height:48px;background:#282b34;"></div>
<svg style="position:absolute;left:46px;top:1572px;" width="30" height="30" viewBox="0 0 30 30" fill="none" stroke-linecap="round" stroke-linejoin="round"><circle cx="7" cy="5" r="3" fill="#8c8f9d"/><circle cx="21" cy="5" r="3" fill="#8c8f9d"/><circle cx="7" cy="23" r="3" fill="#8c8f9d"/><path d="M7 5 V23 M21 5 C21 11 17 13 12.5 13.8 C9.3 14.4 7 16 7 19" stroke="#8c8f9d" stroke-width="2"/></svg>
<div style="position:absolute;left:81px;top:1570.50px;height:31px;line-height:31px;font-family:'Liberation Sans', sans-serif;font-size:24.6px;color:#8c8f9d;font-weight:400;white-space:pre;-webkit-text-stroke:0.25px #8c8f9d;">main*</div>
<svg style="position:absolute;left:156px;top:1572px;" width="32" height="30" viewBox="0 0 32 30" fill="none" stroke-linecap="round" stroke-linejoin="round"><path d="M5.2 12.4 A11.5 11.5 0 0 1 27.5 10.6" stroke="#8c8f9d" stroke-width="2.2" stroke-linecap="butt"/><path d="M27.2 16.3 A11.5 11.5 0 0 1 5 17.4" stroke="#8c8f9d" stroke-width="2.2" stroke-linecap="butt"/><path d="M1.8 11.2 L8.6 11.6 L5 15.2 Z" fill="#8c8f9d"/><path d="M23.8 16.4 L30.4 16.6 L27.2 12.8 Z" fill="#8c8f9d"/></svg>
<svg style="position:absolute;left:216px;top:1574px;" width="25" height="25" viewBox="0 0 25 25" fill="none" stroke-linecap="round" stroke-linejoin="round"><circle cx="12.5" cy="12.5" r="12" fill="#8c8f9d"/><path d="M9 9 L16 16 M16 9 L9 16" stroke="#282b34" stroke-width="2.6" stroke-linecap="butt"/></svg>
<div style="position:absolute;left:250px;top:1570.50px;height:31px;line-height:31px;font-family:'Liberation Sans', sans-serif;font-size:24.6px;color:#8c8f9d;font-weight:400;white-space:pre;letter-spacing:0.5px;-webkit-text-stroke:0.25px #8c8f9d;">0</div>
<svg style="position:absolute;left:272.5px;top:1574px;" width="25" height="25" viewBox="0 0 25 25" fill="none" stroke-linecap="round" stroke-linejoin="round"><circle cx="12.5" cy="12.5" r="12" fill="#8c8f9d"/><path d="M12.5 6 V14" stroke="#282b34" stroke-width="3" stroke-linecap="butt"/><circle cx="12.5" cy="18.2" r="1.6" fill="#282b34"/></svg>
<div style="position:absolute;left:306px;top:1570.50px;height:31px;line-height:31px;font-family:'Liberation Sans', sans-serif;font-size:24.6px;color:#8c8f9d;font-weight:400;white-space:pre;letter-spacing:1.4px;-webkit-text-stroke:0.25px #8c8f9d;">309</div>
<svg style="position:absolute;left:360px;top:1574px;" width="25" height="25" viewBox="0 0 25 25" fill="none" stroke-linecap="round" stroke-linejoin="round"><circle cx="12.5" cy="12.5" r="12" fill="#8c8f9d"/><path d="M12.5 11 V18.5 M10.5 18.5 H14.5" stroke="#282b34" stroke-width="2.6" stroke-linecap="butt"/><circle cx="12.5" cy="7.2" r="1.6" fill="#282b34"/></svg>
<div style="position:absolute;left:395px;top:1570.50px;height:31px;line-height:31px;font-family:'Liberation Sans', sans-serif;font-size:24.6px;color:#8c8f9d;font-weight:400;white-space:pre;letter-spacing:1px;-webkit-text-stroke:0.25px #8c8f9d;">17</div>
<svg style="position:absolute;left:456px;top:1571px;" width="30" height="30" viewBox="0 0 30 30" fill="none" stroke-linecap="round" stroke-linejoin="round"><path d="M2.6 3.4 Q4.6 5.5 5.6 9.4 M9 3.4 Q11 5.5 12 9.4 M15.4 3.4 Q17.4 5.5 18.4 9.4" stroke="#8c8f9d" stroke-width="1.7"/><path d="M2.2 12.6 H19.8 V17.2 C19.8 21.8 16.2 24.6 11 24.6 C5.8 24.6 2.2 21.8 2.2 17.2 Z" stroke="#8c8f9d" stroke-width="2.2"/><path d="M20 14 H22.8 C25 14 26 15.3 26 17 C26 18.7 25 20 22.8 20 H19.5" stroke="#8c8f9d" stroke-width="2.2"/></svg>
<div style="position:absolute;left:490px;top:1570.50px;height:31px;line-height:31px;font-family:'Liberation Sans', sans-serif;font-size:24.2px;color:#8c8f9d;font-weight:400;white-space:pre;-webkit-text-stroke:0.25px #8c8f9d;">Java: Ready</div>
<svg style="position:absolute;left:1447px;top:1571px;" width="18" height="30" viewBox="0 0 18 30" fill="none" stroke-linecap="round" stroke-linejoin="round"><circle cx="9" cy="15" r="5.5" stroke="#8c8f9d" stroke-width="2.2"/><path d="M9 1.5 V9.5 M9 20.5 V28.5" stroke="#8c8f9d" stroke-width="2.2"/></svg>
<div style="position:absolute;left:1477px;top:1570.50px;height:31px;line-height:31px;font-family:'Liberation Sans', sans-serif;font-size:24.6px;color:#8c8f9d;font-weight:400;white-space:pre;-webkit-text-stroke:0.25px #8c8f9d;">yihui (2 年前)</div>
<div style="position:absolute;left:1658px;top:1570.50px;height:31px;line-height:31px;font-family:'Liberation Sans', sans-serif;font-size:24.6px;color:#8c8f9d;font-weight:400;white-space:pre;-webkit-text-stroke:0.25px #8c8f9d;">行 31，列 16 (已选择15)</div>
<div style="position:absolute;left:1962px;top:1570.50px;height:31px;line-height:31px;font-family:'Liberation Sans', sans-serif;font-size:24.6px;color:#8c8f9d;font-weight:400;white-space:pre;-webkit-text-stroke:0.25px #8c8f9d;">空格: 4</div>
<div style="position:absolute;left:2071px;top:1570.50px;height:31px;line-height:31px;font-family:'Liberation Sans', sans-serif;font-size:24.6px;color:#8c8f9d;font-weight:400;white-space:pre;-webkit-text-stroke:0.25px #8c8f9d;">UTF-8</div>
<div style="position:absolute;left:2176px;top:1570.50px;height:31px;line-height:31px;font-family:'Liberation Sans', sans-serif;font-size:24.6px;color:#8c8f9d;font-weight:400;white-space:pre;-webkit-text-stroke:0.25px #8c8f9d;">LF</div>
<div style="position:absolute;left:2234px;top:1571.00px;height:28px;line-height:28px;font-family:'Liberation Sans', sans-serif;font-size:22px;color:#8c8f9d;font-weight:400;white-space:pre;letter-spacing:-1px;">{ }</div>
<div style="position:absolute;left:2272px;top:1570.50px;height:31px;line-height:31px;font-family:'Liberation Sans', sans-serif;font-size:24.6px;color:#8c8f9d;font-weight:400;white-space:pre;-webkit-text-stroke:0.25px #8c8f9d;">Java</div>
<div style="position:absolute;left:2352px;top:1570.50px;height:31px;line-height:31px;font-family:'Liberation Sans', sans-serif;font-size:24.6px;color:#8c8f9d;font-weight:400;white-space:pre;-webkit-text-stroke:0.25px #8c8f9d;">Tab</div>
<svg style="position:absolute;left:2422px;top:1572px;" width="32" height="30" viewBox="0 0 32 30" fill="none" stroke-linecap="round" stroke-linejoin="round"><path d="M9.5 10.5 V20.5 H6 M11.5 4.5 C13 3 14.5 2.5 16 2.5 C21 2.5 24 6 24 11 V17.5" stroke="#8c8f9d" stroke-width="2.2"/><path d="M6 20.5 H22" stroke="#8c8f9d" stroke-width="2.2"/><path d="M12.5 24.5 H19" stroke="#8c8f9d" stroke-width="2.4"/><path d="M3.5 2 L27.5 26" stroke="#8c8f9d" stroke-width="2.2"/></svg>
</div></div>
</body></html>
